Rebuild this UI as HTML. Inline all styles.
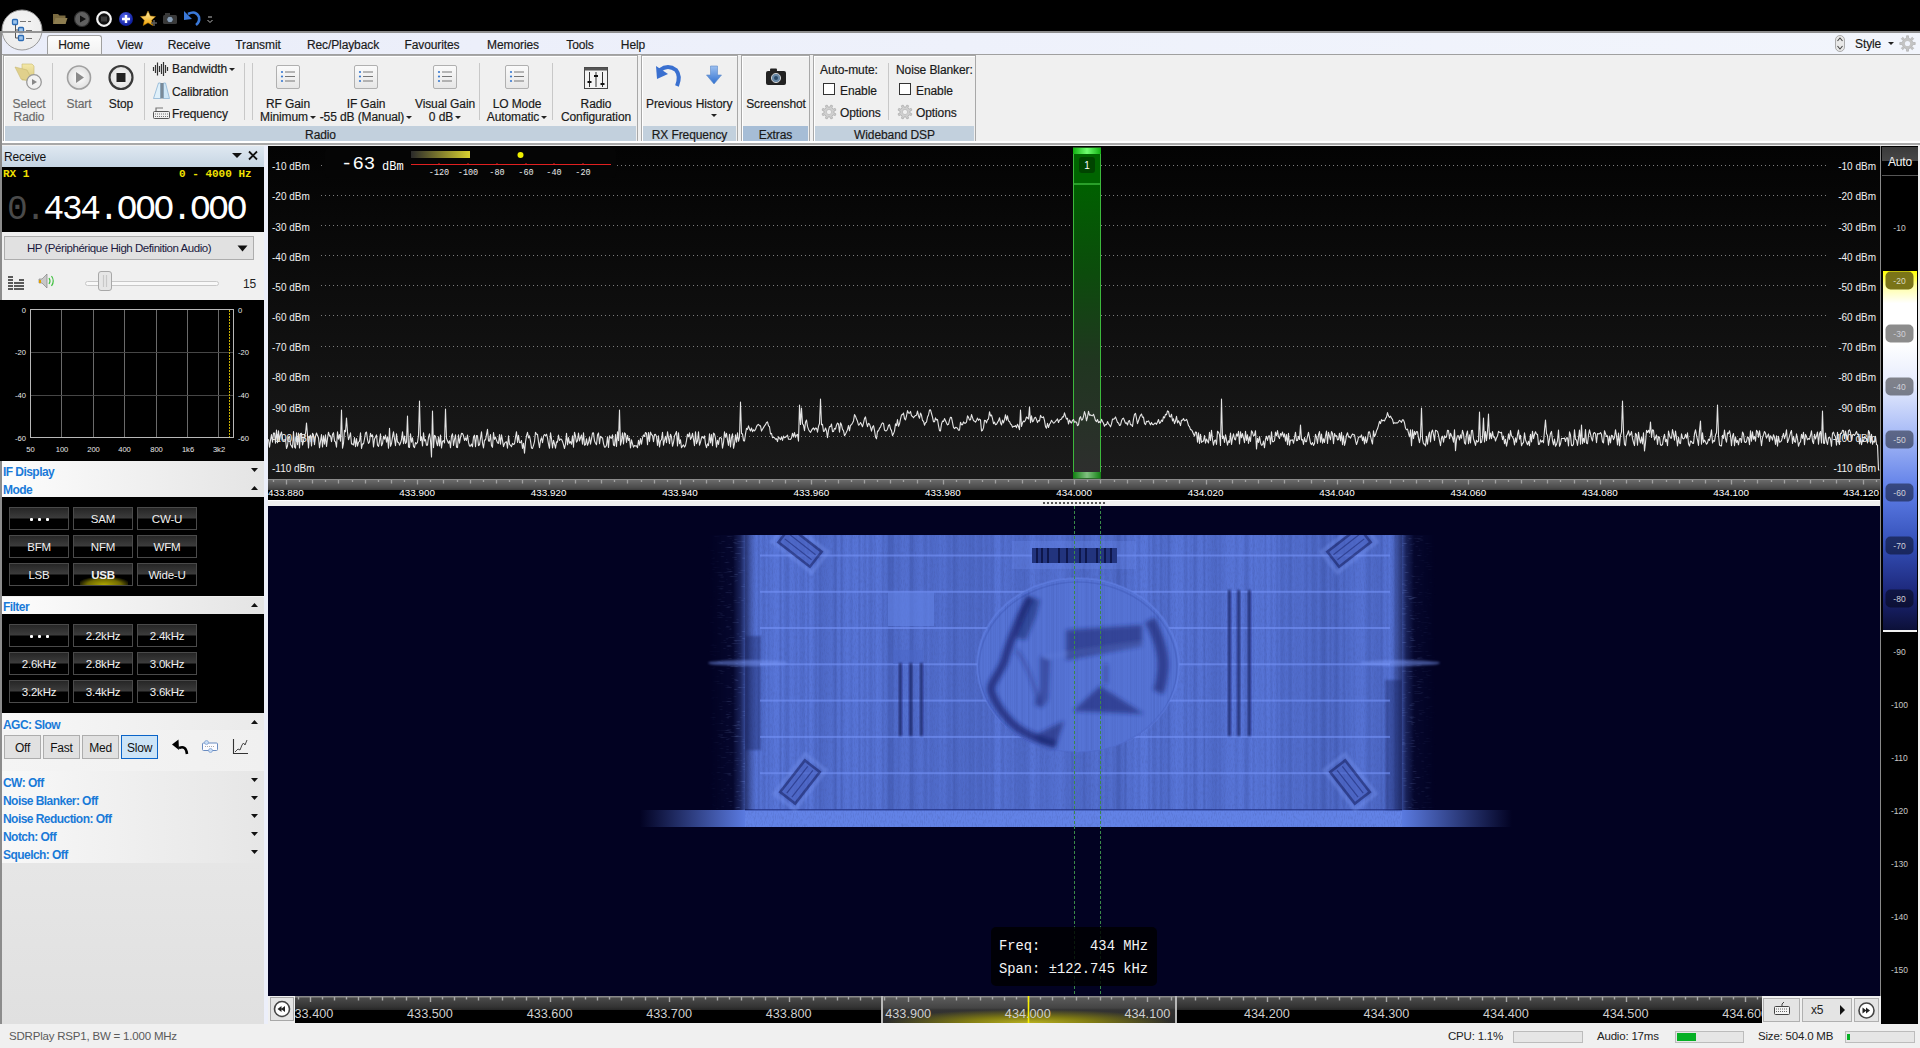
<!DOCTYPE html><html><head><meta charset="utf-8"><style>
*{margin:0;padding:0;box-sizing:border-box}
html,body{width:1920px;height:1048px;overflow:hidden;background:#f0f0f0;font-family:"Liberation Sans",sans-serif;font-size:12px;color:#000;position:relative}
.a{position:absolute}
.t{position:absolute;white-space:nowrap;line-height:1;letter-spacing:-0.2px;margin-top:1px}
.rb{-webkit-text-stroke:0.18px currentColor;letter-spacing:-0.1px}
.t.mono{letter-spacing:0}
.bh{letter-spacing:-0.55px}
.mono{font-family:"Liberation Mono",monospace}
</style></head><body>
<div class="a" style="left:0;top:0;width:1920px;height:31px;background:#000"></div>
<svg class="a" style="left:0;top:0;z-index:5" width="230" height="60">
 <defs>
  <radialGradient id="appg" cx="50%" cy="40%" r="60%"><stop offset="0" stop-color="#f4f4f4"/><stop offset="1" stop-color="#ececec"/></radialGradient>
  <radialGradient id="plg" cx="40%" cy="35%" r="60%"><stop offset="0" stop-color="#5a6cf0"/><stop offset="1" stop-color="#1020a0"/></radialGradient>
  <linearGradient id="starg" x1="0" y1="0" x2="0" y2="1"><stop offset="0" stop-color="#fff2b0"/><stop offset="1" stop-color="#f0a000"/></linearGradient>
 </defs>
 <!-- app button -->
 <circle cx="22" cy="30" r="20" fill="url(#appg)" stroke="#9a9a9a" stroke-width="1"/>
 <g fill="#9cc4ec" stroke="#2a6ab4" stroke-width="1.3">
  <rect x="12.5" y="19.5" width="5" height="5" rx="1"/>
  <rect x="18.5" y="27.5" width="5" height="5" rx="1"/>
  <rect x="18.5" y="35.5" width="5" height="5" rx="1"/>
 </g>
 <path d="M15.5 25 V38 H18.5 M15.5 30 H18.5" stroke="#555" fill="none" stroke-width="1"/>
 <path d="M20 21.5 H26 M28 21.5 H31 M26 30.5 H32 M26 38.5 H32" stroke="#666" stroke-width="0.9"/>
 <!-- folder -->
 <path d="M53 14 h5 l1.5 1.5 h6 v8.5 h-12.5z" fill="#7a6a40"/>
 <path d="M53.5 24 l2 -6 h12 l-2 6z" fill="#8d7d50"/>
 <!-- play -->
 <circle cx="82" cy="19" r="7.5" fill="#606060" stroke="#303030" stroke-width="1.2"/>
 <path d="M80 15.5 L86 19 L80 22.5z" fill="#111"/>
 <!-- stop -->
 <circle cx="104" cy="19" r="6.8" fill="#111" stroke="#f4f4f4" stroke-width="2.2"/>
 <rect x="101" y="16.5" width="6" height="5" fill="#3a3a3a"/>
 <!-- plus -->
 <circle cx="126" cy="19" r="7" fill="url(#plg)"/>
 <path d="M126 15 V23 M122 19 H130" stroke="#fff" stroke-width="2.4"/>
 <!-- star -->
 <path d="M148 11 L150.3 16 L155.5 16.6 L151.6 20.2 L152.8 25.5 L148 22.8 L143.2 25.5 L144.4 20.2 L140.5 16.6 L145.7 16z" fill="url(#starg)" stroke="#c08000" stroke-width="0.5"/>
 <path d="M151 23 h6 M154 20 v6" stroke="#5a5a5a" stroke-width="1.6"/>
 <!-- camera -->
 <rect x="163" y="15" width="14" height="9" rx="1.5" fill="#3a3a3a"/>
 <rect x="165" y="13" width="5" height="3" fill="#3a3a3a"/>
 <circle cx="170" cy="19.5" r="3.3" fill="#8aa0b8" stroke="#222" stroke-width="0.8"/>
 <!-- undo -->
 <path d="M188 14 Q196 10 199 17 Q200 22 196 25" stroke="#3a78d8" stroke-width="2.6" fill="none"/>
 <path d="M184 11 L184 20 L192 19z" fill="#3a78d8"/>
 <!-- dropdown -->
 <path d="M208 17 h4 M207.5 20 l2.5 2.5 l2.5 -2.5" stroke="#bbb" stroke-width="1" fill="none"/>
</svg>
<div class="a" style="left:0;top:31px;width:1920px;height:2px;background:#8c8c8c"></div>
<div class="a" style="left:0;top:33px;width:1920px;height:22px;background:linear-gradient(90deg,#eaedf9,#eef1fb 50%,#f2f5fc)"></div>
<div class="a" style="left:0;top:31px;width:2px;height:993px;background:#8c8c8c"></div>
<div class="a" style="left:47px;top:35px;width:55px;height:21px;background:linear-gradient(#fdfdfd,#f0f0f0);border:1px solid #a0a0a0;border-bottom:none;border-radius:3px 3px 0 0"></div>

<div class="t rb" style="left:14px;width:120px;text-align:center;top:38px;font-size:12px;color:#1a1a1a">Home</div>
<div class="t rb" style="left:70px;width:120px;text-align:center;top:38px;font-size:12px;color:#1a1a1a">View</div>
<div class="t rb" style="left:129px;width:120px;text-align:center;top:38px;font-size:12px;color:#1a1a1a">Receive</div>
<div class="t rb" style="left:198px;width:120px;text-align:center;top:38px;font-size:12px;color:#1a1a1a">Transmit</div>
<div class="t rb" style="left:283px;width:120px;text-align:center;top:38px;font-size:12px;color:#1a1a1a">Rec/Playback</div>
<div class="t rb" style="left:372px;width:120px;text-align:center;top:38px;font-size:12px;color:#1a1a1a">Favourites</div>
<div class="t rb" style="left:453px;width:120px;text-align:center;top:38px;font-size:12px;color:#1a1a1a">Memories</div>
<div class="t rb" style="left:520px;width:120px;text-align:center;top:38px;font-size:12px;color:#1a1a1a">Tools</div>
<div class="t rb" style="left:573px;width:120px;text-align:center;top:38px;font-size:12px;color:#1a1a1a">Help</div>
<div class="a" style="left:2px;top:54px;width:1918px;height:91px;background:#f0f0f0;border-top:1px solid #a0a0a0"></div>
<div class="a" style="left:2px;top:141px;width:1918px;height:2px;background:#fff"></div>
<div class="a" style="left:2px;top:143px;width:1918px;height:2px;background:#a8a8a8"></div>

<div class="a" style="left:3px;top:55px;width:635px;height:86px;border:1px solid #a8a8a8;border-bottom:none;box-shadow:inset 1px 1px 0 #fff"></div>
<div class="a" style="left:5px;top:126px;width:631px;height:15px;background:#c2d0dd"></div>
<div class="t rb" style="left:3px;width:635px;text-align:center;top:128px;color:#1a1a1a">Radio</div>
<div class="a" style="left:641px;top:55px;width:97px;height:86px;border:1px solid #a8a8a8;border-bottom:none;box-shadow:inset 1px 1px 0 #fff"></div>
<div class="a" style="left:643px;top:126px;width:93px;height:15px;background:#c2d0dd"></div>
<div class="t rb" style="left:641px;width:97px;text-align:center;top:128px;color:#1a1a1a">RX Frequency</div>
<div class="a" style="left:741px;top:55px;width:69px;height:86px;border:1px solid #a8a8a8;border-bottom:none;box-shadow:inset 1px 1px 0 #fff"></div>
<div class="a" style="left:743px;top:126px;width:65px;height:15px;background:#a6bdd6"></div>
<div class="t rb" style="left:741px;width:69px;text-align:center;top:128px;color:#1a1a1a">Extras</div>
<div class="a" style="left:813px;top:55px;width:163px;height:86px;border:1px solid #a8a8a8;border-bottom:none;box-shadow:inset 1px 1px 0 #fff"></div>
<div class="a" style="left:815px;top:126px;width:159px;height:15px;background:#c2d0dd"></div>
<div class="t rb" style="left:813px;width:163px;text-align:center;top:128px;color:#1a1a1a">Wideband DSP</div>
<div class="a" style="left:52px;top:63px;width:1px;height:57px;background:#c8c8c8"></div>
<div class="a" style="left:144px;top:63px;width:1px;height:57px;background:#c8c8c8"></div>
<div class="a" style="left:244px;top:63px;width:1px;height:57px;background:#c8c8c8"></div>
<div class="a" style="left:252px;top:63px;width:1px;height:57px;background:#c8c8c8"></div>
<div class="a" style="left:479px;top:63px;width:1px;height:57px;background:#c8c8c8"></div>
<div class="a" style="left:552px;top:63px;width:1px;height:57px;background:#c8c8c8"></div>
<div class="a" style="left:888px;top:63px;width:1px;height:57px;background:#c8c8c8"></div>
<div class="t rb" style="left:-31px;width:120px;text-align:center;top:97px;color:#6a6a6a;">Select</div>
<div class="t rb" style="left:-31px;width:120px;text-align:center;top:110px;color:#6a6a6a;">Radio</div>
<div class="t rb" style="left:19px;width:120px;text-align:center;top:97px;color:#6a6a6a;">Start</div>
<div class="t rb" style="left:61px;width:120px;text-align:center;top:97px;color:#1a1a1a;">Stop</div>
<div class="t rb" style="left:172px;top:62px;color:#1a1a1a;">Bandwidth<span style="display:inline-block;width:0;height:0;border-left:3px solid transparent;border-right:3px solid transparent;border-top:3px solid #222;vertical-align:2px;margin-left:2px"></span></div>
<div class="t rb" style="left:172px;top:85px;color:#1a1a1a;">Calibration</div>
<div class="t rb" style="left:172px;top:107px;color:#1a1a1a;">Frequency</div>
<div class="t rb" style="left:228px;width:120px;text-align:center;top:97px;color:#1a1a1a;">RF Gain</div>
<div class="t rb" style="left:228px;width:120px;text-align:center;top:110px;color:#1a1a1a;">Minimum<span style="display:inline-block;width:0;height:0;border-left:3px solid transparent;border-right:3px solid transparent;border-top:3px solid #222;vertical-align:2px;margin-left:2px"></span></div>
<div class="t rb" style="left:306px;width:120px;text-align:center;top:97px;color:#1a1a1a;">IF Gain</div>
<div class="t rb" style="left:306px;width:120px;text-align:center;top:110px;color:#1a1a1a;">-55 dB (Manual)<span style="display:inline-block;width:0;height:0;border-left:3px solid transparent;border-right:3px solid transparent;border-top:3px solid #222;vertical-align:2px;margin-left:2px"></span></div>
<div class="t rb" style="left:385px;width:120px;text-align:center;top:97px;color:#1a1a1a;">Visual Gain</div>
<div class="t rb" style="left:385px;width:120px;text-align:center;top:110px;color:#1a1a1a;">0 dB<span style="display:inline-block;width:0;height:0;border-left:3px solid transparent;border-right:3px solid transparent;border-top:3px solid #222;vertical-align:2px;margin-left:2px"></span></div>
<div class="t rb" style="left:457px;width:120px;text-align:center;top:97px;color:#1a1a1a;">LO Mode</div>
<div class="t rb" style="left:457px;width:120px;text-align:center;top:110px;color:#1a1a1a;">Automatic<span style="display:inline-block;width:0;height:0;border-left:3px solid transparent;border-right:3px solid transparent;border-top:3px solid #222;vertical-align:2px;margin-left:2px"></span></div>
<div class="t rb" style="left:536px;width:120px;text-align:center;top:97px;color:#1a1a1a;">Radio</div>
<div class="t rb" style="left:536px;width:120px;text-align:center;top:110px;color:#1a1a1a;">Configuration</div>
<div class="t rb" style="left:609px;width:120px;text-align:center;top:97px;color:#1a1a1a;">Previous</div>
<div class="t rb" style="left:654px;width:120px;text-align:center;top:97px;color:#1a1a1a;">History</div>
<div class="a" style="left:711px;top:114px;width:0;height:0;border-left:3px solid transparent;border-right:3px solid transparent;border-top:3px solid #222"></div>
<div class="t rb" style="left:716px;width:120px;text-align:center;top:97px;color:#1a1a1a;">Screenshot</div>
<div class="t rb" style="left:820px;top:63px;color:#1a1a1a;">Auto-mute:</div>
<div class="t rb" style="left:896px;top:63px;color:#1a1a1a;">Noise Blanker:</div>
<div class="t rb" style="left:840px;top:84px;color:#1a1a1a;">Enable</div>
<div class="t rb" style="left:916px;top:84px;color:#1a1a1a;">Enable</div>
<div class="t rb" style="left:840px;top:106px;color:#1a1a1a;">Options</div>
<div class="t rb" style="left:916px;top:106px;color:#1a1a1a;">Options</div>
<div class="a" style="left:823px;top:83px;width:12px;height:12px;background:#fff;border:1px solid #333"></div>
<div class="a" style="left:899px;top:83px;width:12px;height:12px;background:#fff;border:1px solid #333"></div>
<div class="t rb" style="left:1855px;top:37px;color:#1a1a1a;">Style</div>
<div class="a" style="left:1888px;top:42px;width:0;height:0;border-left:3px solid transparent;border-right:3px solid transparent;border-top:3px solid #222"></div>
<svg class="a" style="left:0;top:55px" width="1000" height="75" viewBox="0 55 1000 75">
<defs>
 <linearGradient id="fold" x1="0" y1="0" x2="0" y2="1"><stop offset="0" stop-color="#f4e8a8"/><stop offset="1" stop-color="#d8c880"/></linearGradient>
 <radialGradient id="stopg" cx="50%" cy="50%" r="50%"><stop offset="0" stop-color="#fff"/><stop offset="1" stop-color="#e0e0e0"/></radialGradient>
 <linearGradient id="doc" x1="0" y1="0" x2="0" y2="1"><stop offset="0" stop-color="#fbfbfb"/><stop offset="1" stop-color="#e6e6e6"/></linearGradient>
 <linearGradient id="arr" x1="0" y1="0" x2="0" y2="1"><stop offset="0" stop-color="#9cc0f0"/><stop offset="1" stop-color="#3070d0"/></linearGradient>
</defs>
<!-- select radio -->
<path d="M22 64 h10 l2 2 v14 h-12z" fill="url(#fold)" stroke="#c8b870" stroke-width="0.6"/>
<path d="M15 67 l12 3 l6 12 l-12 -3z" fill="#e0d08c" stroke="#c8b870" stroke-width="0.6"/>
<circle cx="34" cy="82" r="7.3" fill="#f2f2f2" stroke="#999" stroke-width="1.3"/>
<path d="M32 79 L37 82 L32 85z" fill="#888"/>
<!-- start -->
<circle cx="79" cy="77.5" r="11.5" fill="url(#stopg)" stroke="#a0a0a0" stroke-width="1.6"/>
<path d="M76 72 L84 77.5 L76 83z" fill="#8a8a8a"/>
<!-- stop -->
<circle cx="121" cy="77.5" r="11.5" fill="url(#stopg)" stroke="#3a3a3a" stroke-width="2.2"/>
<rect x="116.5" y="73" width="9" height="9" fill="#222"/>
<!-- bandwidth -->
<g stroke="#333" stroke-width="1.2">
<path d="M153.5 67 v4 M155.5 65 v8 M157.5 62.5 v13 M159.5 66 v6 M161.5 64 v10 M163.5 62 v14 M165.5 65 v8 M167.5 67 v4"/>
</g>
<!-- calibration -->
<path d="M153.5 98.5 L158.5 83 L160.5 83 L160.5 98.5z" fill="#dff0fa" stroke="#8cb4d4" stroke-width="0.8"/>
<path d="M163.5 98.5 L163.5 83 L165.5 83 L169.5 98.5z" fill="#cfe6f6" stroke="#8cb4d4" stroke-width="0.8"/>
<rect x="160.5" y="83" width="3" height="15.5" fill="#7a8a98"/>
<!-- frequency keyboard -->
<rect x="153.5" y="111.5" width="16" height="7" rx="1" fill="#f0f0f0" stroke="#555" stroke-width="1"/>
<path d="M155 114 h13 M155 116.5 h13" stroke="#666" stroke-width="0.9" stroke-dasharray="1 1"/>
<path d="M156 111 v-3 h7" stroke="#777" stroke-width="1.2" fill="none"/>
<rect x="276.5" y="65.5" width="23" height="23" rx="1.5" fill="url(#doc)" stroke="#b0b0b0"/>
<circle cx="282" cy="72" r="1.1" fill="#3a7ad0"/><circle cx="282" cy="76.5" r="1.1" fill="#3a7ad0"/><circle cx="282" cy="81" r="1.1" fill="#3a7ad0"/>
<path d="M285 72 h10 M285 76.5 h10 M285 81 h10" stroke="#777" stroke-width="1"/><rect x="354.5" y="65.5" width="23" height="23" rx="1.5" fill="url(#doc)" stroke="#b0b0b0"/>
<circle cx="360" cy="72" r="1.1" fill="#3a7ad0"/><circle cx="360" cy="76.5" r="1.1" fill="#3a7ad0"/><circle cx="360" cy="81" r="1.1" fill="#3a7ad0"/>
<path d="M363 72 h10 M363 76.5 h10 M363 81 h10" stroke="#777" stroke-width="1"/><rect x="433.5" y="65.5" width="23" height="23" rx="1.5" fill="url(#doc)" stroke="#b0b0b0"/>
<circle cx="439" cy="72" r="1.1" fill="#3a7ad0"/><circle cx="439" cy="76.5" r="1.1" fill="#3a7ad0"/><circle cx="439" cy="81" r="1.1" fill="#3a7ad0"/>
<path d="M442 72 h10 M442 76.5 h10 M442 81 h10" stroke="#777" stroke-width="1"/><rect x="505.5" y="65.5" width="23" height="23" rx="1.5" fill="url(#doc)" stroke="#b0b0b0"/>
<circle cx="511" cy="72" r="1.1" fill="#3a7ad0"/><circle cx="511" cy="76.5" r="1.1" fill="#3a7ad0"/><circle cx="511" cy="81" r="1.1" fill="#3a7ad0"/>
<path d="M514 72 h10 M514 76.5 h10 M514 81 h10" stroke="#777" stroke-width="1"/>
<!-- radio config -->
<rect x="584.5" y="67.5" width="23" height="21" fill="#f4f4f4" stroke="#444"/>
<rect x="584.5" y="67.5" width="23" height="3" fill="#555"/>
<path d="M589.5 72 v15 M596 72 v15 M602.5 72 v15" stroke="#333" stroke-width="1"/>
<path d="M587.5 82 h4 M594 76 h4 M600.5 84 h4" stroke="#111" stroke-width="2"/>
<!-- previous -->
<path d="M660 70 Q668 64 676 70 Q681 76 677 86" stroke="#3a70d0" stroke-width="4" fill="none"/>
<path d="M656 66 L657 79 L668 74z" fill="#3a70d0"/>
<!-- history -->
<path d="M710.5 66 h7 v9 h4 l-7.5 9 l-7.5 -9 h4z" fill="url(#arr)" stroke="#5a88c8" stroke-width="0.6"/>
<!-- camera -->
<rect x="766" y="71" width="20" height="14" rx="2" fill="#222"/>
<rect x="770" y="68.5" width="7" height="3" rx="1" fill="#222"/>
<circle cx="776" cy="78" r="4.6" fill="#6a8aa8" stroke="#ccc" stroke-width="1"/>
<circle cx="776" cy="78" r="2" fill="#2a4a68"/>
<!-- gears -->
<g fill="#cfcfcf" stroke="#a8a8a8" stroke-width="0.7">
<path d="M833.93,112.86 L835.95,113.87 L835.24,115.59 L833.09,114.88 L831.88,116.09 L832.59,118.24 L830.87,118.95 L829.86,116.93 L828.14,116.93 L827.13,118.95 L825.41,118.24 L826.12,116.09 L824.91,114.88 L822.76,115.59 L822.05,113.87 L824.07,112.86 L824.07,111.14 L822.05,110.13 L822.76,108.41 L824.91,109.12 L826.12,107.91 L825.41,105.76 L827.13,105.05 L828.14,107.07 L829.86,107.07 L830.87,105.05 L832.59,105.76 L831.88,107.91 L833.09,109.12 L835.24,108.41 L835.95,110.13 L833.93,111.14z"/><path d="M909.93,112.86 L911.95,113.87 L911.24,115.59 L909.09,114.88 L907.88,116.09 L908.59,118.24 L906.87,118.95 L905.86,116.93 L904.14,116.93 L903.13,118.95 L901.41,118.24 L902.12,116.09 L900.91,114.88 L898.76,115.59 L898.05,113.87 L900.07,112.86 L900.07,111.14 L898.05,110.13 L898.76,108.41 L900.91,109.12 L902.12,107.91 L901.41,105.76 L903.13,105.05 L904.14,107.07 L905.86,107.07 L906.87,105.05 L908.59,105.76 L907.88,107.91 L909.09,109.12 L911.24,108.41 L911.95,110.13 L909.93,111.14z"/>
</g>
<circle cx="829" cy="112" r="2.6" fill="#f0f0f0" stroke="#b0b0b0" stroke-width="0.6"/><circle cx="905" cy="112" r="2.6" fill="#f0f0f0" stroke="#b0b0b0" stroke-width="0.6"/>
</svg>
<svg class="a" style="left:1830px;top:33px" width="90" height="22">
<rect x="5.5" y="2.5" width="9" height="16" rx="4.5" fill="#e8e8e8" stroke="#999" stroke-width="0.8"/>
<path d="M7.5 8 l2.5 -3 l2.5 3 M7.5 13 l2.5 3 l2.5 -3" stroke="#444" fill="none" stroke-width="1.1"/>
<path d="M82.79,9.43 L85.23,9.49 L85.23,11.51 L82.79,11.57 L82.00,13.48 L83.68,15.25 L82.25,16.68 L80.48,15.00 L78.57,15.79 L78.51,18.23 L76.49,18.23 L76.43,15.79 L74.52,15.00 L72.75,16.68 L71.32,15.25 L73.00,13.48 L72.21,11.57 L69.77,11.51 L69.77,9.49 L72.21,9.43 L73.00,7.52 L71.32,5.75 L72.75,4.32 L74.52,6.00 L76.43,5.21 L76.49,2.77 L78.51,2.77 L78.57,5.21 L80.48,6.00 L82.25,4.32 L83.68,5.75 L82.00,7.52z" fill="#c4c4c4" stroke="#a8a8a8" stroke-width="0.6"/>
<circle cx="77.5" cy="10.5" r="2.6" fill="#f0f3fb"/>
</svg>
<div class="a" style="left:2px;top:31px;width:42px;height:2px;background:#8c8c8c;z-index:6;opacity:0.9"></div>
<div class="a" style="left:2px;top:145px;width:262px;height:879px;background:#f0f0f0"></div>
<div class="a" style="left:264px;top:145px;width:4px;height:879px;background:#eceffa"></div>
<div class="a" style="left:2px;top:146px;width:262px;height:21px;background:linear-gradient(#dfe8f1,#c6d5e3)"></div>
<div class="t" style="left:4px;top:150px;font-size:12px;color:#111">Receive</div>
<svg class="a" style="left:228px;top:148px" width="36" height="16"><path d="M4 5 h10 l-5 5z" fill="#111"/><path d="M21 3.5 l8 8 M29 3.5 l-8 8" stroke="#111" stroke-width="1.8"/></svg>
<div class="a" style="left:2px;top:167px;width:262px;height:65px;background:#000"></div>
<div class="t mono" style="left:3px;top:168px;font-size:11px;font-weight:bold;color:#f0e000">RX 1</div>
<div class="t mono" style="left:179px;top:168px;font-size:11px;font-weight:bold;color:#f0e000">0 - 4000 Hz</div>
<div class="t mono" style="left:7px;top:192px;font-size:34.5px;color:#fff;letter-spacing:-2.4px"><span style="color:#4a4a4a">0.</span>434.OOO.OOO</div>
<div class="a" style="left:4px;top:236px;width:250px;height:24px;background:#e1e1e1;border:1px solid #adadad"></div>
<div class="t" style="left:4px;width:230px;text-align:center;top:242px;font-size:11.5px;letter-spacing:-0.45px;color:#1a1a40">HP (Périphérique High Definition Audio)</div>
<svg class="a" style="left:236px;top:244px" width="14" height="10"><path d="M1.5 1.5 h10 l-5 6z" fill="#111"/></svg>
<svg class="a" style="left:6px;top:270px" width="250" height="24">
 <rect x="2" y="18" width="5" height="2" fill="#5a5a5a"/><rect x="2" y="15" width="5" height="2" fill="#5a5a5a"/><rect x="2" y="12" width="5" height="2" fill="#5a5a5a"/><rect x="2" y="9" width="5" height="2" fill="#5a5a5a"/><rect x="2" y="6" width="5" height="2" fill="#5a5a5a"/><rect x="8" y="18" width="5" height="2" fill="#5a5a5a"/><rect x="8" y="15" width="5" height="2" fill="#5a5a5a"/><rect x="8" y="12" width="5" height="2" fill="#5a5a5a"/><rect x="13" y="18" width="5" height="2" fill="#5a5a5a"/><rect x="13" y="15" width="5" height="2" fill="#5a5a5a"/><rect x="13" y="12" width="5" height="2" fill="#5a5a5a"/><rect x="13" y="9" width="5" height="2" fill="#5a5a5a"/>
 <path d="M33 9 h3 l5 -5 v14 l-5 -5 h-3z" fill="#c8c8c8" stroke="#777" stroke-width="0.6"/>
 <path d="M33 10 h2 v3 h-2z" fill="#e0a000"/>
 <path d="M43 8 q2 3 0 6 M45.5 6 q3.5 5 0 10" stroke="#40c040" stroke-width="1.2" fill="none"/>
 <rect x="79.5" y="11.5" width="133" height="4" rx="2" fill="#f8f8f8" stroke="#c8c8c8"/>
 <rect x="92.5" y="1.5" width="13" height="19" rx="2.5" fill="#e6e6e6" stroke="#a8a8a8"/>
 <path d="M97.5 5 v12 M100.5 5 v12" stroke="#c8c8c8" stroke-width="1.2"/>
</svg>
<div class="t" style="left:243px;top:277px;font-size:12px;color:#222">15</div>

<div class="a" style="left:0;top:300px;width:264px;height:161px;background:#000"></div>
<svg class="a" style="left:2px;top:299px" width="262" height="162"><path d="M59.5 10.5 V138.5" stroke="#6a6a6a" stroke-width="1"/><path d="M91.5 10.5 V138.5" stroke="#6a6a6a" stroke-width="1"/><path d="M122.5 10.5 V138.5" stroke="#6a6a6a" stroke-width="1"/><path d="M154.5 10.5 V138.5" stroke="#6a6a6a" stroke-width="1"/><path d="M185.5 10.5 V138.5" stroke="#6a6a6a" stroke-width="1"/><path d="M216.5 10.5 V138.5" stroke="#6a6a6a" stroke-width="1"/><path d="M28.5 53.5 H231.5" stroke="#464646" stroke-width="1"/><path d="M28.5 96.5 H231.5" stroke="#464646" stroke-width="1"/><rect x="28.5" y="10.5" width="203.0" height="128.0" fill="none" stroke="#b8b8b8" stroke-width="1"/><path d="M227.5 11 V138" stroke="#c8b000" stroke-width="1" stroke-dasharray="2 1"/><g font-family="Liberation Sans" font-size="7.6" fill="#e8e8e8"><text x="24" y="14" text-anchor="end">0</text><text x="236" y="14">0</text><text x="24" y="56" text-anchor="end">-20</text><text x="236" y="56">-20</text><text x="24" y="99" text-anchor="end">-40</text><text x="236" y="99">-40</text><text x="24" y="142" text-anchor="end">-60</text><text x="236" y="142">-60</text><text x="28.5" y="153" text-anchor="middle">50</text><text x="60" y="153" text-anchor="middle">100</text><text x="91.5" y="153" text-anchor="middle">200</text><text x="122.5" y="153" text-anchor="middle">400</text><text x="154.5" y="153" text-anchor="middle">800</text><text x="186" y="153" text-anchor="middle">1k6</text><text x="217" y="153" text-anchor="middle">3k2</text></g></svg>
<div class="a" style="left:2px;top:461px;width:262px;height:18px;background:linear-gradient(90deg,#fdfdfd,#e4e4e4)"></div>
<div class="t" style="left:3px;top:465px;font-size:12px;font-weight:bold;color:#1a7ad8;letter-spacing:-0.55px">IF Display</div>
<svg class="a" style="left:250px;top:467px" width="10" height="7"><path d="M1 1 h7 l-3.5 4z" fill="#111"/></svg>
<div class="a" style="left:2px;top:479px;width:262px;height:18px;background:linear-gradient(90deg,#fdfdfd,#e4e4e4)"></div>
<div class="t" style="left:3px;top:483px;font-size:12px;font-weight:bold;color:#1a7ad8;letter-spacing:-0.55px">Mode</div>
<svg class="a" style="left:250px;top:485px" width="10" height="7"><path d="M1 5 h7 l-3.5 -4z" fill="#111"/></svg>
<div class="a" style="left:2px;top:497px;width:262px;height:99px;background:#000"></div>
<div class="a" style="left:9px;top:507px;width:60px;height:23px;border:1px solid #4a4a4a;background:linear-gradient(#262626 0,#3c3c3c 10px,#000 11px,#000 100%);overflow:hidden"><div class="t" style="left:0;width:58px;text-align:center;top:5px;font-size:11.5px;color:#f0f0f0;font-weight:normal"><svg width="20" height="5" style="vertical-align:1px"><rect x="1" y="1" width="3" height="3" rx="1" fill="#fff"/><rect x="9" y="1" width="3" height="3" rx="1" fill="#fff"/><rect x="17" y="1" width="3" height="3" rx="1" fill="#fff"/></svg></div></div>
<div class="a" style="left:73px;top:507px;width:60px;height:23px;border:1px solid #4a4a4a;background:linear-gradient(#262626 0,#3c3c3c 10px,#000 11px,#000 100%);overflow:hidden"><div class="t" style="left:0;width:58px;text-align:center;top:5px;font-size:11.5px;color:#f0f0f0;font-weight:normal">SAM</div></div>
<div class="a" style="left:137px;top:507px;width:60px;height:23px;border:1px solid #4a4a4a;background:linear-gradient(#262626 0,#3c3c3c 10px,#000 11px,#000 100%);overflow:hidden"><div class="t" style="left:0;width:58px;text-align:center;top:5px;font-size:11.5px;color:#f0f0f0;font-weight:normal">CW-U</div></div>
<div class="a" style="left:9px;top:535px;width:60px;height:23px;border:1px solid #4a4a4a;background:linear-gradient(#262626 0,#3c3c3c 10px,#000 11px,#000 100%);overflow:hidden"><div class="t" style="left:0;width:58px;text-align:center;top:5px;font-size:11.5px;color:#f0f0f0;font-weight:normal">BFM</div></div>
<div class="a" style="left:73px;top:535px;width:60px;height:23px;border:1px solid #4a4a4a;background:linear-gradient(#262626 0,#3c3c3c 10px,#000 11px,#000 100%);overflow:hidden"><div class="t" style="left:0;width:58px;text-align:center;top:5px;font-size:11.5px;color:#f0f0f0;font-weight:normal">NFM</div></div>
<div class="a" style="left:137px;top:535px;width:60px;height:23px;border:1px solid #4a4a4a;background:linear-gradient(#262626 0,#3c3c3c 10px,#000 11px,#000 100%);overflow:hidden"><div class="t" style="left:0;width:58px;text-align:center;top:5px;font-size:11.5px;color:#f0f0f0;font-weight:normal">WFM</div></div>
<div class="a" style="left:9px;top:563px;width:60px;height:23px;border:1px solid #4a4a4a;background:linear-gradient(#262626 0,#3c3c3c 10px,#000 11px,#000 100%);overflow:hidden"><div class="t" style="left:0;width:58px;text-align:center;top:5px;font-size:11.5px;color:#f0f0f0;font-weight:normal">LSB</div></div>
<div class="a" style="left:73px;top:563px;width:60px;height:23px;border:1px solid #4a4a4a;background:linear-gradient(#262626 0,#3c3c3c 10px,#000 11px,#000 100%);overflow:hidden"><div class="a" style="left:6px;bottom:0;width:48px;height:8px;border-radius:50% 50% 0 0;background:radial-gradient(ellipse at 50% 100%,#b0a800 0%,#706a00 50%,transparent 80%)"></div><div class="t" style="left:0;width:58px;text-align:center;top:5px;font-size:11.5px;color:#f0f0f0;font-weight:bold">USB</div></div>
<div class="a" style="left:137px;top:563px;width:60px;height:23px;border:1px solid #4a4a4a;background:linear-gradient(#262626 0,#3c3c3c 10px,#000 11px,#000 100%);overflow:hidden"><div class="t" style="left:0;width:58px;text-align:center;top:5px;font-size:11.5px;color:#f0f0f0;font-weight:normal">Wide-U</div></div>
<div class="a" style="left:2px;top:597px;width:262px;height:17px;background:linear-gradient(90deg,#fdfdfd,#e4e4e4)"></div>
<div class="t" style="left:3px;top:600px;font-size:12px;font-weight:bold;color:#1a7ad8;letter-spacing:-0.55px">Filter</div>
<svg class="a" style="left:250px;top:602px" width="10" height="7"><path d="M1 5 h7 l-3.5 -4z" fill="#111"/></svg>
<div class="a" style="left:2px;top:614px;width:262px;height:99px;background:#000"></div>
<div class="a" style="left:9px;top:624px;width:60px;height:23px;border:1px solid #4a4a4a;background:linear-gradient(#262626 0,#3c3c3c 10px,#000 11px,#000 100%);overflow:hidden"><div class="t" style="left:0;width:58px;text-align:center;top:5px;font-size:11.5px;color:#f0f0f0;font-weight:normal"><svg width="20" height="5" style="vertical-align:1px"><rect x="1" y="1" width="3" height="3" rx="1" fill="#fff"/><rect x="9" y="1" width="3" height="3" rx="1" fill="#fff"/><rect x="17" y="1" width="3" height="3" rx="1" fill="#fff"/></svg></div></div>
<div class="a" style="left:73px;top:624px;width:60px;height:23px;border:1px solid #4a4a4a;background:linear-gradient(#262626 0,#3c3c3c 10px,#000 11px,#000 100%);overflow:hidden"><div class="t" style="left:0;width:58px;text-align:center;top:5px;font-size:11.5px;color:#f0f0f0;font-weight:normal">2.2kHz</div></div>
<div class="a" style="left:137px;top:624px;width:60px;height:23px;border:1px solid #4a4a4a;background:linear-gradient(#262626 0,#3c3c3c 10px,#000 11px,#000 100%);overflow:hidden"><div class="t" style="left:0;width:58px;text-align:center;top:5px;font-size:11.5px;color:#f0f0f0;font-weight:normal">2.4kHz</div></div>
<div class="a" style="left:9px;top:652px;width:60px;height:23px;border:1px solid #4a4a4a;background:linear-gradient(#262626 0,#3c3c3c 10px,#000 11px,#000 100%);overflow:hidden"><div class="t" style="left:0;width:58px;text-align:center;top:5px;font-size:11.5px;color:#f0f0f0;font-weight:normal">2.6kHz</div></div>
<div class="a" style="left:73px;top:652px;width:60px;height:23px;border:1px solid #4a4a4a;background:linear-gradient(#262626 0,#3c3c3c 10px,#000 11px,#000 100%);overflow:hidden"><div class="t" style="left:0;width:58px;text-align:center;top:5px;font-size:11.5px;color:#f0f0f0;font-weight:normal">2.8kHz</div></div>
<div class="a" style="left:137px;top:652px;width:60px;height:23px;border:1px solid #4a4a4a;background:linear-gradient(#262626 0,#3c3c3c 10px,#000 11px,#000 100%);overflow:hidden"><div class="t" style="left:0;width:58px;text-align:center;top:5px;font-size:11.5px;color:#f0f0f0;font-weight:normal">3.0kHz</div></div>
<div class="a" style="left:9px;top:680px;width:60px;height:23px;border:1px solid #4a4a4a;background:linear-gradient(#262626 0,#3c3c3c 10px,#000 11px,#000 100%);overflow:hidden"><div class="t" style="left:0;width:58px;text-align:center;top:5px;font-size:11.5px;color:#f0f0f0;font-weight:normal">3.2kHz</div></div>
<div class="a" style="left:73px;top:680px;width:60px;height:23px;border:1px solid #4a4a4a;background:linear-gradient(#262626 0,#3c3c3c 10px,#000 11px,#000 100%);overflow:hidden"><div class="t" style="left:0;width:58px;text-align:center;top:5px;font-size:11.5px;color:#f0f0f0;font-weight:normal">3.4kHz</div></div>
<div class="a" style="left:137px;top:680px;width:60px;height:23px;border:1px solid #4a4a4a;background:linear-gradient(#262626 0,#3c3c3c 10px,#000 11px,#000 100%);overflow:hidden"><div class="t" style="left:0;width:58px;text-align:center;top:5px;font-size:11.5px;color:#f0f0f0;font-weight:normal">3.6kHz</div></div>
<div class="a" style="left:2px;top:713px;width:262px;height:58px;background:linear-gradient(90deg,#f8f8f8,#eaeaea)"></div>
<div class="t" style="left:3px;top:718px;font-size:12px;font-weight:bold;color:#1a7ad8;letter-spacing:-0.55px">AGC: Slow</div>
<svg class="a" style="left:250px;top:719px" width="10" height="7"><path d="M1 5 h7 l-3.5 -4z" fill="#111"/></svg>
<div class="a" style="left:2px;top:730px;width:262px;height:41px;background:linear-gradient(90deg,#f4f4f4,#f0f0f0)"></div>
<div class="a" style="left:4px;top:735px;width:37px;height:24px;background:#e1e1e1;border:1px solid #adadad"></div><div class="t" style="left:4px;width:37px;text-align:center;top:741px;font-size:12px;color:#111">Off</div>
<div class="a" style="left:43px;top:735px;width:37px;height:24px;background:#e1e1e1;border:1px solid #adadad"></div><div class="t" style="left:43px;width:37px;text-align:center;top:741px;font-size:12px;color:#111">Fast</div>
<div class="a" style="left:82px;top:735px;width:37px;height:24px;background:#e1e1e1;border:1px solid #adadad"></div><div class="t" style="left:82px;width:37px;text-align:center;top:741px;font-size:12px;color:#111">Med</div>
<div class="a" style="left:121px;top:735px;width:37px;height:24px;background:#cce4f7;border:1px solid #0a64c8"></div><div class="t" style="left:121px;width:37px;text-align:center;top:741px;font-size:12px;color:#111">Slow</div>
<svg class="a" style="left:168px;top:736px" width="90" height="22">
<path d="M11 12 Q18 9 19 18" stroke="#000" stroke-width="2.6" fill="none"/>
<path d="M4 8.5 L10.5 3.5 L11 14z" fill="#000"/>
<rect x="34.5" y="7" width="15" height="7.5" rx="1" fill="#fbfbff" stroke="#6a8cc0" stroke-width="1"/>
<path d="M37 10.5 h10" stroke="#aaa" stroke-dasharray="1 1"/>
<circle cx="38.5" cy="6.5" r="2" fill="#c8dcf4" stroke="#7a9cd0" stroke-width="0.7"/>
<circle cx="42.5" cy="14.5" r="2" fill="#c8dcf4" stroke="#7a9cd0" stroke-width="0.7"/>
<path d="M65.5 3 V18 M65 17.5 H80" stroke="#333" stroke-width="1.1" fill="none"/>
<path d="M67 16 L70 13 L72 14 L74 9 L75.5 7 L77 9 L79 4" stroke="#333" stroke-width="0.9" fill="none"/>
</svg>
<div class="a" style="left:2px;top:771px;width:262px;height:92px;background:linear-gradient(90deg,#f8f8f8,#e6e6e6)"></div>
<div class="t" style="left:3px;top:776px;font-size:12px;font-weight:bold;color:#1a7ad8;letter-spacing:-0.55px">CW: Off</div>
<svg class="a" style="left:250px;top:777px" width="10" height="7"><path d="M1 1 h7 l-3.5 4z" fill="#111"/></svg>
<div class="t" style="left:3px;top:794px;font-size:12px;font-weight:bold;color:#1a7ad8;letter-spacing:-0.55px">Noise Blanker: Off</div>
<svg class="a" style="left:250px;top:795px" width="10" height="7"><path d="M1 1 h7 l-3.5 4z" fill="#111"/></svg>
<div class="t" style="left:3px;top:812px;font-size:12px;font-weight:bold;color:#1a7ad8;letter-spacing:-0.55px">Noise Reduction: Off</div>
<svg class="a" style="left:250px;top:813px" width="10" height="7"><path d="M1 1 h7 l-3.5 4z" fill="#111"/></svg>
<div class="t" style="left:3px;top:830px;font-size:12px;font-weight:bold;color:#1a7ad8;letter-spacing:-0.55px">Notch: Off</div>
<svg class="a" style="left:250px;top:831px" width="10" height="7"><path d="M1 1 h7 l-3.5 4z" fill="#111"/></svg>
<div class="t" style="left:3px;top:848px;font-size:12px;font-weight:bold;color:#1a7ad8;letter-spacing:-0.55px">Squelch: Off</div>
<svg class="a" style="left:250px;top:849px" width="10" height="7"><path d="M1 1 h7 l-3.5 4z" fill="#111"/></svg>
<div class="a" style="left:2px;top:863px;width:262px;height:161px;background:linear-gradient(#e6e6e6,#e0e0e0)"></div>
<div class="a" style="left:268px;top:146px;width:1612px;height:333px;background:linear-gradient(#030303,#0c0c0c 40%,#1a1a1a)"></div>
<svg class="a" style="left:0;top:0" width="1920" height="500"><path d="M321 165.5 H1826" stroke="#7c7c7c" stroke-width="1" stroke-dasharray="1 3"/><path d="M321 195.5 H1826" stroke="#7c7c7c" stroke-width="1" stroke-dasharray="1 3"/><path d="M321 225.5 H1826" stroke="#7c7c7c" stroke-width="1" stroke-dasharray="1 3"/><path d="M321 255.5 H1826" stroke="#7c7c7c" stroke-width="1" stroke-dasharray="1 3"/><path d="M321 285.5 H1826" stroke="#7c7c7c" stroke-width="1" stroke-dasharray="1 3"/><path d="M321 315.5 H1826" stroke="#7c7c7c" stroke-width="1" stroke-dasharray="1 3"/><path d="M321 346.5 H1826" stroke="#7c7c7c" stroke-width="1" stroke-dasharray="1 3"/><path d="M321 376.5 H1826" stroke="#7c7c7c" stroke-width="1" stroke-dasharray="1 3"/><path d="M321 406.5 H1826" stroke="#7c7c7c" stroke-width="1" stroke-dasharray="1 3"/><path d="M321 436.5 H1826" stroke="#7c7c7c" stroke-width="1" stroke-dasharray="1 3"/><path d="M321 466.5 H1826" stroke="#7c7c7c" stroke-width="1" stroke-dasharray="1 3"/><g font-family="Liberation Sans" font-size="10" fill="#f0f0f0"><text x="272" y="170.2">-10 dBm</text><text x="1876" y="170.2" text-anchor="end">-10 dBm</text><text x="272" y="200.4">-20 dBm</text><text x="1876" y="200.4" text-anchor="end">-20 dBm</text><text x="272" y="230.5">-30 dBm</text><text x="1876" y="230.5" text-anchor="end">-30 dBm</text><text x="272" y="260.7">-40 dBm</text><text x="1876" y="260.7" text-anchor="end">-40 dBm</text><text x="272" y="290.8">-50 dBm</text><text x="1876" y="290.8" text-anchor="end">-50 dBm</text><text x="272" y="321.0">-60 dBm</text><text x="1876" y="321.0" text-anchor="end">-60 dBm</text><text x="272" y="351.2">-70 dBm</text><text x="1876" y="351.2" text-anchor="end">-70 dBm</text><text x="272" y="381.3">-80 dBm</text><text x="1876" y="381.3" text-anchor="end">-80 dBm</text><text x="272" y="411.5">-90 dBm</text><text x="1876" y="411.5" text-anchor="end">-90 dBm</text><text x="272" y="441.6">-100 dBm</text><text x="1876" y="441.6" text-anchor="end">-100 dBm</text><text x="272" y="471.8">-110 dBm</text><text x="1876" y="471.8" text-anchor="end">-110 dBm</text></g><defs>
<linearGradient id="mk" x1="0" y1="0" x2="0" y2="1"><stop offset="0" stop-color="#006000"/><stop offset="0.3" stop-color="#0c4c0c"/><stop offset="0.6" stop-color="#203620"/><stop offset="1" stop-color="#2e2e2e"/></linearGradient>
<linearGradient id="mkb" x1="0" y1="0" x2="1" y2="0"><stop offset="0" stop-color="#10b010"/><stop offset="0.5" stop-color="#70ff70"/><stop offset="1" stop-color="#10b010"/></linearGradient>
<linearGradient id="mkb2" x1="0" y1="0" x2="1" y2="0"><stop offset="0" stop-color="#108010"/><stop offset="0.5" stop-color="#80c080"/><stop offset="1" stop-color="#108010"/></linearGradient>
</defs><rect x="1073" y="148" width="28" height="36" fill="#006400"/><rect x="1073" y="184" width="28" height="294" fill="url(#mk)"/><rect x="1073.5" y="148" width="27" height="330" fill="none" stroke="#3cb83c" stroke-width="1"/><rect x="1073" y="148" width="28" height="6" fill="url(#mkb)"/><rect x="1074" y="183" width="26" height="2" fill="#2aa02a"/><rect x="1079" y="157" width="16" height="16" rx="3" fill="#004400"/><text x="1087" y="169" font-family="Liberation Sans" font-size="10" fill="#fff" text-anchor="middle">1</text><rect x="1073" y="472" width="28" height="6" fill="url(#mkb2)"/><polyline fill="none" stroke="#e4e4e4" stroke-width="1.1" stroke-linejoin="round" points="268.5,439.2 269.5,447.2 270.5,440.1 271.5,434.6 272.5,442.2 273.5,433.1 274.5,433.0 275.5,443.3 276.5,430.0 277.5,442.6 278.5,430.7 279.5,440.5 280.5,434.7 281.5,432.0 282.5,439.0 283.5,440.3 284.5,440.0 285.5,439.3 286.5,448.5 287.5,445.8 288.5,436.9 289.5,436.4 290.5,444.5 291.5,445.9 292.5,447.8 293.5,431.5 294.5,447.0 295.5,448.2 296.5,432.7 297.5,444.7 298.5,433.0 299.5,447.9 300.5,433.5 301.5,433.2 302.5,445.0 303.5,441.0 304.5,434.7 305.5,433.7 306.5,423.0 307.5,435.1 308.5,448.0 309.5,436.7 310.5,435.1 311.5,446.0 312.5,433.2 313.5,435.1 314.5,444.6 315.5,436.5 316.5,433.0 317.5,435.6 318.5,437.8 319.5,447.8 320.5,441.3 321.5,434.6 322.5,446.9 323.5,435.7 324.5,444.1 325.5,434.8 326.5,446.5 327.5,438.7 328.5,432.2 329.5,435.6 330.5,435.9 331.5,441.6 332.5,434.5 333.5,432.7 334.5,441.0 335.5,441.9 336.5,447.1 337.5,431.8 338.5,439.1 339.5,434.5 340.5,441.2 341.5,410.0 342.5,448.2 343.5,443.3 344.5,430.2 345.5,431.8 346.5,418.0 347.5,431.9 348.5,439.7 349.5,436.9 350.5,432.8 351.5,444.0 352.5,444.0 353.5,445.0 354.5,437.5 355.5,446.8 356.5,438.6 357.5,446.2 358.5,442.1 359.5,441.4 360.5,432.9 361.5,448.4 362.5,443.9 363.5,444.0 364.5,439.0 365.5,432.9 366.5,432.0 367.5,439.7 368.5,443.4 369.5,441.9 370.5,433.4 371.5,436.6 372.5,434.9 373.5,446.9 374.5,439.0 375.5,437.1 376.5,434.9 377.5,445.2 378.5,446.5 379.5,441.4 380.5,433.8 381.5,445.7 382.5,443.6 383.5,436.2 384.5,439.2 385.5,435.1 386.5,442.1 387.5,436.9 388.5,448.2 389.5,428.4 390.5,446.3 391.5,443.5 392.5,436.8 393.5,431.8 394.5,438.8 395.5,445.6 396.5,433.9 397.5,442.2 398.5,442.2 399.5,445.2 400.5,443.1 401.5,439.6 402.5,431.7 403.5,443.6 404.5,436.1 405.5,443.4 406.5,441.9 407.5,416.0 408.5,446.9 409.5,447.4 410.5,433.7 411.5,442.1 412.5,437.9 413.5,446.4 414.5,447.6 415.5,442.6 416.5,443.8 417.5,442.4 418.5,435.1 419.5,401.0 420.5,440.6 421.5,436.9 422.5,446.0 423.5,432.9 424.5,440.9 425.5,439.7 426.5,445.3 427.5,445.1 428.5,437.2 429.5,433.9 430.5,440.3 431.5,457.0 432.5,411.0 433.5,447.6 434.5,435.3 435.5,436.4 436.5,442.4 437.5,445.8 438.5,436.8 439.5,445.9 440.5,435.0 441.5,448.0 442.5,441.2 443.5,440.6 444.5,442.9 445.5,409.0 446.5,438.3 447.5,441.1 448.5,443.2 449.5,440.7 450.5,447.8 451.5,436.1 452.5,433.7 453.5,445.4 454.5,439.6 455.5,434.8 456.5,447.2 457.5,447.6 458.5,434.8 459.5,443.2 460.5,437.5 461.5,433.3 462.5,433.6 463.5,435.8 464.5,440.5 465.5,437.9 466.5,440.5 467.5,435.0 468.5,442.4 469.5,446.0 470.5,446.1 471.5,444.1 472.5,446.8 473.5,436.9 474.5,435.2 475.5,446.6 476.5,435.6 477.5,435.9 478.5,445.6 479.5,444.9 480.5,438.3 481.5,431.8 482.5,443.1 483.5,448.0 484.5,440.1 485.5,440.0 486.5,434.7 487.5,429.3 488.5,440.9 489.5,441.2 490.5,434.6 491.5,445.8 492.5,447.3 493.5,432.6 494.5,439.4 495.5,437.1 496.5,440.3 497.5,442.7 498.5,443.4 499.5,434.6 500.5,444.1 501.5,434.8 502.5,440.3 503.5,446.7 504.5,443.5 505.5,442.2 506.5,441.7 507.5,448.2 508.5,435.9 509.5,444.2 510.5,445.3 511.5,446.7 512.5,443.3 513.5,444.5 514.5,443.8 515.5,437.3 516.5,431.7 517.5,442.4 518.5,435.4 519.5,442.8 520.5,442.7 521.5,440.6 522.5,448.5 523.5,443.4 524.5,453.1 525.5,442.0 526.5,435.9 527.5,432.4 528.5,437.9 529.5,435.8 530.5,440.9 531.5,447.9 532.5,448.4 533.5,445.3 534.5,441.7 535.5,432.3 536.5,434.2 537.5,434.4 538.5,441.9 539.5,447.6 540.5,440.5 541.5,437.7 542.5,442.6 543.5,436.3 544.5,434.5 545.5,435.7 546.5,434.2 547.5,438.1 548.5,444.2 549.5,448.3 550.5,432.7 551.5,438.8 552.5,448.0 553.5,440.4 554.5,443.8 555.5,448.1 556.5,441.8 557.5,442.1 558.5,435.0 559.5,440.5 560.5,439.0 561.5,439.2 562.5,441.4 563.5,444.7 564.5,448.5 565.5,444.0 566.5,433.4 567.5,444.8 568.5,437.6 569.5,443.1 570.5,441.6 571.5,444.3 572.5,435.7 573.5,447.1 574.5,432.2 575.5,436.1 576.5,442.1 577.5,440.7 578.5,433.0 579.5,440.9 580.5,437.8 581.5,435.1 582.5,444.2 583.5,432.8 584.5,445.3 585.5,444.6 586.5,438.7 587.5,445.3 588.5,442.6 589.5,437.0 590.5,444.2 591.5,438.8 592.5,433.1 593.5,432.8 594.5,441.1 595.5,443.2 596.5,444.7 597.5,435.1 598.5,432.9 599.5,443.8 600.5,436.3 601.5,437.6 602.5,437.7 603.5,443.6 604.5,447.1 605.5,447.0 606.5,445.2 607.5,436.9 608.5,447.4 609.5,435.7 610.5,437.7 611.5,438.2 612.5,434.8 613.5,445.1 614.5,445.7 615.5,434.5 616.5,446.5 617.5,431.9 618.5,440.8 619.5,410.0 620.5,445.2 621.5,440.8 622.5,432.9 623.5,444.0 624.5,432.9 625.5,433.9 626.5,442.5 627.5,435.2 628.5,440.4 629.5,438.2 630.5,448.0 631.5,439.9 632.5,443.8 633.5,447.1 634.5,445.5 635.5,446.0 636.5,445.7 637.5,447.8 638.5,440.4 639.5,445.1 640.5,438.6 641.5,444.1 642.5,437.9 643.5,435.0 644.5,436.5 645.5,432.5 646.5,433.5 647.5,444.7 648.5,432.6 649.5,441.4 650.5,432.1 651.5,434.6 652.5,435.5 653.5,441.6 654.5,434.6 655.5,434.4 656.5,436.8 657.5,445.4 658.5,435.9 659.5,447.0 660.5,440.8 661.5,439.7 662.5,432.3 663.5,445.1 664.5,440.5 665.5,436.2 666.5,442.7 667.5,431.7 668.5,437.8 669.5,443.6 670.5,434.2 671.5,437.0 672.5,446.3 673.5,442.3 674.5,436.0 675.5,434.1 676.5,431.5 677.5,445.9 678.5,432.9 679.5,443.7 680.5,439.7 681.5,447.7 682.5,446.1 683.5,444.9 684.5,447.1 685.5,445.5 686.5,440.7 687.5,434.2 688.5,436.8 689.5,432.8 690.5,439.4 691.5,437.6 692.5,433.3 693.5,439.3 694.5,445.6 695.5,431.7 696.5,443.6 697.5,441.1 698.5,431.7 699.5,445.1 700.5,442.0 701.5,437.9 702.5,436.6 703.5,438.2 704.5,435.9 705.5,443.9 706.5,447.6 707.5,443.8 708.5,445.6 709.5,433.9 710.5,443.0 711.5,434.6 712.5,445.7 713.5,433.0 714.5,434.2 715.5,438.4 716.5,447.2 717.5,440.2 718.5,444.5 719.5,438.1 720.5,437.6 721.5,438.3 722.5,448.2 723.5,442.7 724.5,431.8 725.5,437.3 726.5,433.3 727.5,440.2 728.5,445.5 729.5,434.2 730.5,446.9 731.5,437.5 732.5,433.9 733.5,448.3 734.5,443.7 735.5,434.9 736.5,442.2 737.5,432.9 738.5,441.3 739.5,437.1 740.5,402.0 741.5,433.6 742.5,433.8 743.5,440.7 744.5,441.0 745.5,433.9 746.5,428.4 747.5,429.3 748.5,425.8 749.5,428.9 750.5,430.9 751.5,428.0 752.5,431.7 753.5,429.7 754.5,430.9 755.5,429.5 756.5,426.6 757.5,424.9 758.5,424.4 759.5,425.8 760.5,425.9 761.5,431.1 762.5,429.3 763.5,427.6 764.5,425.9 765.5,424.7 766.5,422.5 767.5,421.9 768.5,425.8 769.5,426.7 770.5,434.0 771.5,433.4 772.5,437.7 773.5,437.2 774.5,437.7 775.5,439.3 776.5,438.7 777.5,441.6 778.5,436.7 779.5,438.2 780.5,439.6 781.5,436.9 782.5,440.4 783.5,436.1 784.5,437.7 785.5,437.3 786.5,436.3 787.5,435.2 788.5,439.3 789.5,439.3 790.5,439.5 791.5,437.9 792.5,433.2 793.5,437.0 794.5,432.5 795.5,437.3 796.5,435.1 797.5,434.4 798.5,441.1 799.5,405.0 800.5,424.4 801.5,408.0 802.5,423.7 803.5,425.1 804.5,430.6 805.5,422.3 806.5,420.1 807.5,426.4 808.5,429.4 809.5,431.2 810.5,432.4 811.5,430.4 812.5,428.9 813.5,427.9 814.5,429.9 815.5,428.0 816.5,428.2 817.5,432.2 818.5,426.4 819.5,423.5 820.5,399.0 821.5,424.7 822.5,424.3 823.5,431.5 824.5,431.1 825.5,428.0 826.5,430.9 827.5,437.7 828.5,430.4 829.5,426.6 830.5,426.6 831.5,424.0 832.5,431.6 833.5,431.5 834.5,428.4 835.5,429.1 836.5,425.2 837.5,423.1 838.5,424.0 839.5,432.3 840.5,422.7 841.5,424.8 842.5,429.4 843.5,430.7 844.5,435.6 845.5,434.1 846.5,432.1 847.5,429.6 848.5,425.5 849.5,430.8 850.5,425.2 851.5,424.7 852.5,423.0 853.5,420.9 854.5,414.6 855.5,416.2 856.5,419.1 857.5,421.3 858.5,425.2 859.5,424.6 860.5,422.5 861.5,424.3 862.5,426.7 863.5,423.2 864.5,418.6 865.5,416.9 866.5,422.7 867.5,426.7 868.5,423.3 869.5,424.1 870.5,427.2 871.5,431.1 872.5,427.1 873.5,425.7 874.5,430.3 875.5,436.9 876.5,438.8 877.5,431.1 878.5,430.9 879.5,428.2 880.5,427.1 881.5,424.3 882.5,422.9 883.5,423.4 884.5,430.0 885.5,430.9 886.5,430.7 887.5,429.2 888.5,425.5 889.5,424.6 890.5,428.9 891.5,430.6 892.5,435.7 893.5,433.6 894.5,431.1 895.5,423.9 896.5,425.6 897.5,419.6 898.5,426.3 899.5,423.8 900.5,419.1 901.5,414.8 902.5,414.6 903.5,413.0 904.5,418.7 905.5,419.9 906.5,416.0 907.5,410.6 908.5,413.0 909.5,413.3 910.5,411.4 911.5,415.8 912.5,416.4 913.5,417.8 914.5,416.4 915.5,415.5 916.5,415.2 917.5,411.1 918.5,415.7 919.5,418.3 920.5,413.0 921.5,415.3 922.5,420.5 923.5,421.2 924.5,425.2 925.5,422.8 926.5,422.1 927.5,417.1 928.5,414.9 929.5,410.1 930.5,409.9 931.5,413.5 932.5,417.1 933.5,421.8 934.5,421.8 935.5,417.9 936.5,420.0 937.5,419.5 938.5,425.6 939.5,430.7 940.5,430.9 941.5,424.0 942.5,421.1 943.5,421.5 944.5,418.6 945.5,420.8 946.5,422.9 947.5,424.9 948.5,424.3 949.5,420.1 950.5,417.2 951.5,417.6 952.5,422.7 953.5,427.3 954.5,428.6 955.5,427.4 956.5,427.6 957.5,428.2 958.5,430.3 959.5,430.3 960.5,422.2 961.5,424.8 962.5,424.8 963.5,421.9 964.5,423.1 965.5,423.2 966.5,422.1 967.5,415.8 968.5,417.4 969.5,420.0 970.5,419.8 971.5,414.5 972.5,417.6 973.5,420.7 974.5,421.1 975.5,422.2 976.5,420.4 977.5,418.1 978.5,420.4 979.5,419.1 980.5,420.0 981.5,431.0 982.5,430.3 983.5,427.9 984.5,420.2 985.5,420.5 986.5,422.9 987.5,419.7 988.5,419.0 989.5,411.7 990.5,415.9 991.5,415.0 992.5,418.7 993.5,423.7 994.5,422.1 995.5,424.8 996.5,424.3 997.5,422.4 998.5,420.8 999.5,417.7 1000.5,422.7 1001.5,424.9 1002.5,420.1 1003.5,422.9 1004.5,419.7 1005.5,414.7 1006.5,420.2 1007.5,415.8 1008.5,421.0 1009.5,421.4 1010.5,424.0 1011.5,424.6 1012.5,427.2 1013.5,426.4 1014.5,426.5 1015.5,425.6 1016.5,427.7 1017.5,424.2 1018.5,426.5 1019.5,429.7 1020.5,410.0 1021.5,426.4 1022.5,422.9 1023.5,421.1 1024.5,421.7 1025.5,420.0 1026.5,417.0 1027.5,417.8 1028.5,419.0 1029.5,407.0 1030.5,422.7 1031.5,415.9 1032.5,421.8 1033.5,420.8 1034.5,417.9 1035.5,417.3 1036.5,419.5 1037.5,422.6 1038.5,420.6 1039.5,421.0 1040.5,415.3 1041.5,417.2 1042.5,417.6 1043.5,416.8 1044.5,420.7 1045.5,426.6 1046.5,428.2 1047.5,423.3 1048.5,427.5 1049.5,424.3 1050.5,422.9 1051.5,420.2 1052.5,421.7 1053.5,423.1 1054.5,422.7 1055.5,421.2 1056.5,420.4 1057.5,418.9 1058.5,422.5 1059.5,420.1 1060.5,419.5 1061.5,419.0 1062.5,416.7 1063.5,416.9 1064.5,412.8 1065.5,416.2 1066.5,419.1 1067.5,418.3 1068.5,424.0 1069.5,420.1 1070.5,422.0 1071.5,423.0 1072.5,420.4 1073.5,419.5 1074.5,422.3 1075.5,421.8 1076.5,422.2 1077.5,425.7 1078.5,424.8 1079.5,418.4 1080.5,416.7 1081.5,420.1 1082.5,419.7 1083.5,416.6 1084.5,411.6 1085.5,414.9 1086.5,420.8 1087.5,416.9 1088.5,411.3 1089.5,415.2 1090.5,414.9 1091.5,415.5 1092.5,415.8 1093.5,414.3 1094.5,417.2 1095.5,420.7 1096.5,421.6 1097.5,419.5 1098.5,422.7 1099.5,421.6 1100.5,422.9 1101.5,419.3 1102.5,421.5 1103.5,423.3 1104.5,426.2 1105.5,424.5 1106.5,424.6 1107.5,421.6 1108.5,423.8 1109.5,425.0 1110.5,426.8 1111.5,423.8 1112.5,419.1 1113.5,419.1 1114.5,418.8 1115.5,416.9 1116.5,419.6 1117.5,422.5 1118.5,423.0 1119.5,425.5 1120.5,425.1 1121.5,420.8 1122.5,418.8 1123.5,418.1 1124.5,420.7 1125.5,423.2 1126.5,422.7 1127.5,425.0 1128.5,421.1 1129.5,420.5 1130.5,424.8 1131.5,424.8 1132.5,426.5 1133.5,419.1 1134.5,414.4 1135.5,413.4 1136.5,418.3 1137.5,423.6 1138.5,420.7 1139.5,417.6 1140.5,415.3 1141.5,414.0 1142.5,417.3 1143.5,417.1 1144.5,423.5 1145.5,424.7 1146.5,421.3 1147.5,421.7 1148.5,420.8 1149.5,422.9 1150.5,424.8 1151.5,422.4 1152.5,424.4 1153.5,424.8 1154.5,423.2 1155.5,423.1 1156.5,424.3 1157.5,422.1 1158.5,419.5 1159.5,423.4 1160.5,422.5 1161.5,420.1 1162.5,421.4 1163.5,416.7 1164.5,417.8 1165.5,414.4 1166.5,414.7 1167.5,410.9 1168.5,411.4 1169.5,416.4 1170.5,416.9 1171.5,414.2 1172.5,421.0 1173.5,418.8 1174.5,423.6 1175.5,421.0 1176.5,416.4 1177.5,422.9 1178.5,420.8 1179.5,422.8 1180.5,425.6 1181.5,420.2 1182.5,420.3 1183.5,418.6 1184.5,420.8 1185.5,420.5 1186.5,419.3 1187.5,421.8 1188.5,425.7 1189.5,426.6 1190.5,429.6 1191.5,429.8 1192.5,431.5 1193.5,434.1 1194.5,436.0 1195.5,432.0 1196.5,432.2 1197.5,442.1 1198.5,432.9 1199.5,443.5 1200.5,434.3 1201.5,442.4 1202.5,441.2 1203.5,441.2 1204.5,435.5 1205.5,443.1 1206.5,439.0 1207.5,441.1 1208.5,443.0 1209.5,432.4 1210.5,440.5 1211.5,430.4 1212.5,439.3 1213.5,445.1 1214.5,440.8 1215.5,440.0 1216.5,444.5 1217.5,431.2 1218.5,432.3 1219.5,434.8 1220.5,445.4 1221.5,399.0 1222.5,438.6 1223.5,436.1 1224.5,442.5 1225.5,434.8 1226.5,439.8 1227.5,445.2 1228.5,440.9 1229.5,442.5 1230.5,433.1 1231.5,444.5 1232.5,437.8 1233.5,433.8 1234.5,439.0 1235.5,439.9 1236.5,433.9 1237.5,436.0 1238.5,431.3 1239.5,443.9 1240.5,431.7 1241.5,437.8 1242.5,433.5 1243.5,437.8 1244.5,442.6 1245.5,431.4 1246.5,440.4 1247.5,434.7 1248.5,443.5 1249.5,437.1 1250.5,441.4 1251.5,430.9 1252.5,432.3 1253.5,435.9 1254.5,435.2 1255.5,430.7 1256.5,449.0 1257.5,438.4 1258.5,442.4 1259.5,436.5 1260.5,442.9 1261.5,445.3 1262.5,444.8 1263.5,441.1 1264.5,447.8 1265.5,439.2 1266.5,436.3 1267.5,440.4 1268.5,436.0 1269.5,435.8 1270.5,444.1 1271.5,431.9 1272.5,441.6 1273.5,441.6 1274.5,440.7 1275.5,432.1 1276.5,435.8 1277.5,430.6 1278.5,436.6 1279.5,438.6 1280.5,433.6 1281.5,435.3 1282.5,432.1 1283.5,437.0 1284.5,433.8 1285.5,441.1 1286.5,434.6 1287.5,444.7 1288.5,433.3 1289.5,445.3 1290.5,440.0 1291.5,440.2 1292.5,439.7 1293.5,443.3 1294.5,438.1 1295.5,432.2 1296.5,440.8 1297.5,440.5 1298.5,436.3 1299.5,439.5 1300.5,425.0 1301.5,439.9 1302.5,439.4 1303.5,444.5 1304.5,437.5 1305.5,441.6 1306.5,441.6 1307.5,436.5 1308.5,432.4 1309.5,437.9 1310.5,443.1 1311.5,444.6 1312.5,442.5 1313.5,445.4 1314.5,443.6 1315.5,434.3 1316.5,437.3 1317.5,443.5 1318.5,434.7 1319.5,431.6 1320.5,442.3 1321.5,434.1 1322.5,443.3 1323.5,438.7 1324.5,442.5 1325.5,436.0 1326.5,431.1 1327.5,443.5 1328.5,432.3 1329.5,436.3 1330.5,439.8 1331.5,431.6 1332.5,433.6 1333.5,443.6 1334.5,433.5 1335.5,436.3 1336.5,435.6 1337.5,439.9 1338.5,439.5 1339.5,433.2 1340.5,440.9 1341.5,432.4 1342.5,444.6 1343.5,435.9 1344.5,445.4 1345.5,441.5 1346.5,435.2 1347.5,432.7 1348.5,436.9 1349.5,436.6 1350.5,438.1 1351.5,435.7 1352.5,434.0 1353.5,434.8 1354.5,434.8 1355.5,440.7 1356.5,444.5 1357.5,441.6 1358.5,437.2 1359.5,436.8 1360.5,437.1 1361.5,434.9 1362.5,440.6 1363.5,436.7 1364.5,443.9 1365.5,436.8 1366.5,442.8 1367.5,439.4 1368.5,432.0 1369.5,431.8 1370.5,436.1 1371.5,440.5 1372.5,444.0 1373.5,430.8 1374.5,436.6 1375.5,434.6 1376.5,430.8 1377.5,428.8 1378.5,425.4 1379.5,421.4 1380.5,423.6 1381.5,419.6 1382.5,420.9 1383.5,420.3 1384.5,421.0 1385.5,418.5 1386.5,417.1 1387.5,412.6 1388.5,415.9 1389.5,417.5 1390.5,416.1 1391.5,418.2 1392.5,419.3 1393.5,423.7 1394.5,422.7 1395.5,423.1 1396.5,422.9 1397.5,423.0 1398.5,421.8 1399.5,420.4 1400.5,421.1 1401.5,422.4 1402.5,419.7 1403.5,420.1 1404.5,422.8 1405.5,428.2 1406.5,429.7 1407.5,429.1 1408.5,433.2 1409.5,436.8 1410.5,429.8 1411.5,445.6 1412.5,429.9 1413.5,438.6 1414.5,431.4 1415.5,434.6 1416.5,431.6 1417.5,431.7 1418.5,438.2 1419.5,442.7 1420.5,436.5 1421.5,408.0 1422.5,439.0 1423.5,444.0 1424.5,444.0 1425.5,446.0 1426.5,436.4 1427.5,444.2 1428.5,435.6 1429.5,432.1 1430.5,442.0 1431.5,432.2 1432.5,430.0 1433.5,434.6 1434.5,440.4 1435.5,430.3 1436.5,430.8 1437.5,431.4 1438.5,435.1 1439.5,440.6 1440.5,445.6 1441.5,438.0 1442.5,436.2 1443.5,442.1 1444.5,435.8 1445.5,437.6 1446.5,436.8 1447.5,430.3 1448.5,430.5 1449.5,438.8 1450.5,433.3 1451.5,435.8 1452.5,437.7 1453.5,442.2 1454.5,429.7 1455.5,450.7 1456.5,439.6 1457.5,435.7 1458.5,435.8 1459.5,439.9 1460.5,434.9 1461.5,438.3 1462.5,430.4 1463.5,433.8 1464.5,443.0 1465.5,444.1 1466.5,434.4 1467.5,431.0 1468.5,443.6 1469.5,434.9 1470.5,442.9 1471.5,430.5 1472.5,430.3 1473.5,438.9 1474.5,441.8 1475.5,445.4 1476.5,440.2 1477.5,442.0 1478.5,441.1 1479.5,412.0 1480.5,442.8 1481.5,442.3 1482.5,437.1 1483.5,418.0 1484.5,442.0 1485.5,431.5 1486.5,440.8 1487.5,431.4 1488.5,414.0 1489.5,439.0 1490.5,433.1 1491.5,438.6 1492.5,431.6 1493.5,437.2 1494.5,436.8 1495.5,441.0 1496.5,437.9 1497.5,436.1 1498.5,431.3 1499.5,432.3 1500.5,432.9 1501.5,432.3 1502.5,439.6 1503.5,436.1 1504.5,443.8 1505.5,439.4 1506.5,446.2 1507.5,441.4 1508.5,433.9 1509.5,439.3 1510.5,430.6 1511.5,435.9 1512.5,436.9 1513.5,439.0 1514.5,445.0 1515.5,437.8 1516.5,442.3 1517.5,434.7 1518.5,430.1 1519.5,439.2 1520.5,435.2 1521.5,445.7 1522.5,443.2 1523.5,442.8 1524.5,432.9 1525.5,439.9 1526.5,442.5 1527.5,444.8 1528.5,441.2 1529.5,445.7 1530.5,434.4 1531.5,441.9 1532.5,431.2 1533.5,438.6 1534.5,434.5 1535.5,431.7 1536.5,434.1 1537.5,434.2 1538.5,444.4 1539.5,444.1 1540.5,439.9 1541.5,442.0 1542.5,440.7 1543.5,442.7 1544.5,430.4 1545.5,420.0 1546.5,433.5 1547.5,435.8 1548.5,445.5 1549.5,439.1 1550.5,433.4 1551.5,431.4 1552.5,440.7 1553.5,444.8 1554.5,439.1 1555.5,446.3 1556.5,444.3 1557.5,440.8 1558.5,430.0 1559.5,446.2 1560.5,444.0 1561.5,438.4 1562.5,438.5 1563.5,438.5 1564.5,438.0 1565.5,441.5 1566.5,437.8 1567.5,437.8 1568.5,446.0 1569.5,431.8 1570.5,435.2 1571.5,445.5 1572.5,445.6 1573.5,444.1 1574.5,429.8 1575.5,439.5 1576.5,439.9 1577.5,445.4 1578.5,438.3 1579.5,430.0 1580.5,444.3 1581.5,425.1 1582.5,443.6 1583.5,438.3 1584.5,442.4 1585.5,429.5 1586.5,443.0 1587.5,443.7 1588.5,435.2 1589.5,429.8 1590.5,434.0 1591.5,438.4 1592.5,441.0 1593.5,433.5 1594.5,432.5 1595.5,433.8 1596.5,442.8 1597.5,433.6 1598.5,433.9 1599.5,433.8 1600.5,432.6 1601.5,434.6 1602.5,441.8 1603.5,442.9 1604.5,430.8 1605.5,433.7 1606.5,436.5 1607.5,435.8 1608.5,445.0 1609.5,436.1 1610.5,442.9 1611.5,435.2 1612.5,436.0 1613.5,439.6 1614.5,437.6 1615.5,429.7 1616.5,436.0 1617.5,445.0 1618.5,433.0 1619.5,445.8 1620.5,435.3 1621.5,431.9 1622.5,401.0 1623.5,431.8 1624.5,444.5 1625.5,445.6 1626.5,435.8 1627.5,434.1 1628.5,430.7 1629.5,435.4 1630.5,434.7 1631.5,431.6 1632.5,438.7 1633.5,442.5 1634.5,445.6 1635.5,433.3 1636.5,434.8 1637.5,445.2 1638.5,432.2 1639.5,439.2 1640.5,443.0 1641.5,437.3 1642.5,443.9 1643.5,432.7 1644.5,451.0 1645.5,442.5 1646.5,430.4 1647.5,432.4 1648.5,430.2 1649.5,433.2 1650.5,422.0 1651.5,437.4 1652.5,429.8 1653.5,430.2 1654.5,440.0 1655.5,437.5 1656.5,434.9 1657.5,444.5 1658.5,436.6 1659.5,437.3 1660.5,445.0 1661.5,445.4 1662.5,444.5 1663.5,438.2 1664.5,434.4 1665.5,441.8 1666.5,439.4 1667.5,445.6 1668.5,431.1 1669.5,435.4 1670.5,438.0 1671.5,438.2 1672.5,429.5 1673.5,434.1 1674.5,440.2 1675.5,431.0 1676.5,437.7 1677.5,446.0 1678.5,437.0 1679.5,443.1 1680.5,443.6 1681.5,433.8 1682.5,438.1 1683.5,438.9 1684.5,437.8 1685.5,434.4 1686.5,438.1 1687.5,432.8 1688.5,443.7 1689.5,446.1 1690.5,441.1 1691.5,441.6 1692.5,443.1 1693.5,443.4 1694.5,433.6 1695.5,429.9 1696.5,435.3 1697.5,439.9 1698.5,445.4 1699.5,430.6 1700.5,421.0 1701.5,444.3 1702.5,432.7 1703.5,442.4 1704.5,440.1 1705.5,441.9 1706.5,444.3 1707.5,442.9 1708.5,439.2 1709.5,440.4 1710.5,436.0 1711.5,429.9 1712.5,443.0 1713.5,440.6 1714.5,441.3 1715.5,434.9 1716.5,432.7 1717.5,405.0 1718.5,435.1 1719.5,445.0 1720.5,445.7 1721.5,445.9 1722.5,435.2 1723.5,438.4 1724.5,430.1 1725.5,438.6 1726.5,442.2 1727.5,432.9 1728.5,433.6 1729.5,430.7 1730.5,435.5 1731.5,445.6 1732.5,436.5 1733.5,433.5 1734.5,445.8 1735.5,436.9 1736.5,442.5 1737.5,440.4 1738.5,444.8 1739.5,438.7 1740.5,438.5 1741.5,442.5 1742.5,432.1 1743.5,434.1 1744.5,441.9 1745.5,442.5 1746.5,441.5 1747.5,436.9 1748.5,437.6 1749.5,444.6 1750.5,430.7 1751.5,441.3 1752.5,431.7 1753.5,439.2 1754.5,436.4 1755.5,441.1 1756.5,430.3 1757.5,431.7 1758.5,437.3 1759.5,430.7 1760.5,437.5 1761.5,445.7 1762.5,437.8 1763.5,434.9 1764.5,431.5 1765.5,433.3 1766.5,438.1 1767.5,436.3 1768.5,433.9 1769.5,441.5 1770.5,435.7 1771.5,437.2 1772.5,440.1 1773.5,434.7 1774.5,437.2 1775.5,444.5 1776.5,435.9 1777.5,446.1 1778.5,436.3 1779.5,442.1 1780.5,441.8 1781.5,440.6 1782.5,436.9 1783.5,433.3 1784.5,438.7 1785.5,435.3 1786.5,429.8 1787.5,442.5 1788.5,439.9 1789.5,436.3 1790.5,432.8 1791.5,430.5 1792.5,443.5 1793.5,436.2 1794.5,441.6 1795.5,442.2 1796.5,433.8 1797.5,439.0 1798.5,446.3 1799.5,442.8 1800.5,441.9 1801.5,434.2 1802.5,438.5 1803.5,432.3 1804.5,444.7 1805.5,434.4 1806.5,436.6 1807.5,439.8 1808.5,438.5 1809.5,439.2 1810.5,435.5 1811.5,430.8 1812.5,441.3 1813.5,443.6 1814.5,434.2 1815.5,439.0 1816.5,435.9 1817.5,432.0 1818.5,444.3 1819.5,433.7 1820.5,431.5 1821.5,443.0 1822.5,411.0 1823.5,443.3 1824.5,443.4 1825.5,433.1 1826.5,441.4 1827.5,444.4 1828.5,437.6 1829.5,437.0 1830.5,439.2 1831.5,446.3 1832.5,433.3 1833.5,432.1 1834.5,435.3 1835.5,436.8 1836.5,445.1 1837.5,432.4 1838.5,441.5 1839.5,444.5 1840.5,433.4 1841.5,433.4 1842.5,430.3 1843.5,430.6 1844.5,438.7 1845.5,431.1 1846.5,435.5 1847.5,439.7 1848.5,430.6 1849.5,429.9 1850.5,432.5 1851.5,440.8 1852.5,435.0 1853.5,434.4 1854.5,435.5 1855.5,433.7 1856.5,431.5 1857.5,434.8 1858.5,434.1 1859.5,443.9 1860.5,438.2 1861.5,444.6 1862.5,440.1 1863.5,441.3 1864.5,436.5 1865.5,438.1 1866.5,438.5 1867.5,442.9 1868.5,430.5 1869.5,432.6 1870.5,443.0 1871.5,434.4 1872.5,444.3 1873.5,441.1 1874.5,442.2 1875.5,436.3 1876.5,444.5 1877.5,445.1 1878.5,470.0 1879.5,470.0"/></svg>
<div class="a" style="left:325px;top:148px;width:291px;height:30px;background:#050505;border-radius:4px"></div>
<div class="t mono" style="left:341px;top:154px;font-size:19px;color:#fff">-63</div>
<div class="t mono" style="left:382px;top:160px;font-size:12px;color:#fff">dBm</div>
<svg class="a" style="left:405px;top:148px" width="215" height="30">
<defs><linearGradient id="mg" x1="0" x2="1"><stop offset="0" stop-color="#2a2a2a"/><stop offset="1" stop-color="#d8d030"/></linearGradient></defs>
<rect x="6" y="3" width="59" height="7" fill="url(#mg)"/>
<circle cx="115.5" cy="7" r="3" fill="#f0f000"/>
<path d="M6 16.5 H206" stroke="#e02020" stroke-width="1"/>
<g font-family="Liberation Mono" font-size="8.5" fill="#e8e8e8">
<text x="34" y="27" text-anchor="middle">-120</text><text x="63" y="27" text-anchor="middle">-100</text><text x="92" y="27" text-anchor="middle">-80</text><text x="121" y="27" text-anchor="middle">-60</text><text x="149" y="27" text-anchor="middle">-40</text><text x="178" y="27" text-anchor="middle">-20</text>
</g>
<path d="M34 15 v2 M63 15 v2 M92 15 v2 M121 15 v2 M149 15 v2 M178 15 v2" stroke="#e02020"/>
</svg>
<div class="a" style="left:268px;top:479px;width:1612px;height:21px;background:linear-gradient(#8a8a8a 0,#8a8a8a 1px,#6a6a6a 1px,#4a4a4a 9px,#3a3a3a 11px,#000 11px)"></div>
<svg class="a" style="left:0;top:470px" width="1920" height="40"><path d="M273.5 10 v2 M286.5 10 v4.5 M299.5 10 v2 M312.5 10 v3.5 M325.5 10 v2 M338.5 10 v3.5 M352.5 10 v2 M365.5 10 v3.5 M378.5 10 v2 M391.5 10 v3.5 M404.5 10 v2 M417.5 10 v4.5 M430.5 10 v2 M443.5 10 v3.5 M457.5 10 v2 M470.5 10 v3.5 M483.5 10 v2 M496.5 10 v3.5 M509.5 10 v2 M522.5 10 v3.5 M535.5 10 v2 M549.5 10 v4.5 M562.5 10 v2 M575.5 10 v3.5 M588.5 10 v2 M601.5 10 v3.5 M614.5 10 v2 M627.5 10 v3.5 M641.5 10 v2 M654.5 10 v3.5 M667.5 10 v2 M680.5 10 v4.5 M693.5 10 v2 M706.5 10 v3.5 M719.5 10 v2 M733.5 10 v3.5 M746.5 10 v2 M759.5 10 v3.5 M772.5 10 v2 M785.5 10 v3.5 M798.5 10 v2 M811.5 10 v4.5 M825.5 10 v2 M838.5 10 v3.5 M851.5 10 v2 M864.5 10 v3.5 M877.5 10 v2 M890.5 10 v3.5 M903.5 10 v2 M917.5 10 v3.5 M930.5 10 v2 M943.5 10 v4.5 M956.5 10 v2 M969.5 10 v3.5 M982.5 10 v2 M995.5 10 v3.5 M1008.5 10 v2 M1022.5 10 v3.5 M1035.5 10 v2 M1048.5 10 v3.5 M1061.5 10 v2 M1074.5 10 v4.5 M1087.5 10 v2 M1100.5 10 v3.5 M1114.5 10 v2 M1127.5 10 v3.5 M1140.5 10 v2 M1153.5 10 v3.5 M1166.5 10 v2 M1179.5 10 v3.5 M1192.5 10 v2 M1206.5 10 v4.5 M1219.5 10 v2 M1232.5 10 v3.5 M1245.5 10 v2 M1258.5 10 v3.5 M1271.5 10 v2 M1284.5 10 v3.5 M1298.5 10 v2 M1311.5 10 v3.5 M1324.5 10 v2 M1337.5 10 v4.5 M1350.5 10 v2 M1363.5 10 v3.5 M1376.5 10 v2 M1390.5 10 v3.5 M1403.5 10 v2 M1416.5 10 v3.5 M1429.5 10 v2 M1442.5 10 v3.5 M1455.5 10 v2 M1468.5 10 v4.5 M1482.5 10 v2 M1495.5 10 v3.5 M1508.5 10 v2 M1521.5 10 v3.5 M1534.5 10 v2 M1547.5 10 v3.5 M1560.5 10 v2 M1574.5 10 v3.5 M1587.5 10 v2 M1600.5 10 v4.5 M1613.5 10 v2 M1626.5 10 v3.5 M1639.5 10 v2 M1652.5 10 v3.5 M1666.5 10 v2 M1679.5 10 v3.5 M1692.5 10 v2 M1705.5 10 v3.5 M1718.5 10 v2 M1731.5 10 v4.5 M1744.5 10 v2 M1757.5 10 v3.5 M1771.5 10 v2 M1784.5 10 v3.5 M1797.5 10 v2 M1810.5 10 v3.5 M1823.5 10 v2 M1836.5 10 v3.5 M1849.5 10 v2 M1863.5 10 v4.5 M1876.5 10 v2" stroke="#a0a0a0" stroke-width="1.3"/><g font-family="Liberation Sans" font-size="9.9" fill="#fff"><text x="268.0" y="26.2" text-anchor="start">433.880</text><text x="417.2" y="26.2" text-anchor="middle">433.900</text><text x="548.6" y="26.2" text-anchor="middle">433.920</text><text x="680.0" y="26.2" text-anchor="middle">433.940</text><text x="811.4" y="26.2" text-anchor="middle">433.960</text><text x="942.8" y="26.2" text-anchor="middle">433.980</text><text x="1074.2" y="26.2" text-anchor="middle">434.000</text><text x="1205.6" y="26.2" text-anchor="middle">434.020</text><text x="1337.0" y="26.2" text-anchor="middle">434.040</text><text x="1468.4" y="26.2" text-anchor="middle">434.060</text><text x="1599.8" y="26.2" text-anchor="middle">434.080</text><text x="1731.2" y="26.2" text-anchor="middle">434.100</text><text x="1879.0" y="26.2" text-anchor="end">434.120</text></g></svg>
<div class="a" style="left:268px;top:500px;width:1612px;height:6px;background:#f0f0f0;border-top:1px solid #fff"></div>
<div class="a" style="left:1043px;top:502px;width:63px;height:2px;background:repeating-linear-gradient(90deg,#555 0,#555 2px,transparent 2px,transparent 4px)"></div>
<div class="a" style="left:268px;top:506px;width:1612px;height:490px;background:#020222"></div>
<svg class="a" style="left:0;top:0" width="1920" height="1000"><defs>
<linearGradient id="fzl" x1="0" x2="1"><stop offset="0" stop-color="#5270d2" stop-opacity="0"/><stop offset="0.6" stop-color="#4a64c0" stop-opacity="0.45"/><stop offset="1" stop-color="#5270d2" stop-opacity="1"/></linearGradient>
<linearGradient id="fzr" x1="0" x2="1"><stop offset="0" stop-color="#5270d2" stop-opacity="1"/><stop offset="0.35" stop-color="#4a64c0" stop-opacity="0.45"/><stop offset="1" stop-color="#5270d2" stop-opacity="0"/></linearGradient>
<linearGradient id="bbl" x1="0" x2="1"><stop offset="0" stop-color="#5a7ae0" stop-opacity="0"/><stop offset="1" stop-color="#5a7ae0" stop-opacity="1"/></linearGradient>
<linearGradient id="bbr" x1="0" x2="1"><stop offset="0" stop-color="#5a7ae0" stop-opacity="1"/><stop offset="1" stop-color="#5a7ae0" stop-opacity="0"/></linearGradient>
<pattern id="vstr" width="37" height="10" patternUnits="userSpaceOnUse">
<rect x="3" width="2" height="10" fill="#1a2a70" opacity="0.18"/><rect x="11" width="1" height="10" fill="#1a2a70" opacity="0.25"/><rect x="17" width="3" height="10" fill="#8aa0ff" opacity="0.08"/><rect x="26" width="1" height="10" fill="#1a2a70" opacity="0.2"/><rect x="31" width="2" height="10" fill="#1a2a70" opacity="0.12"/>
</pattern>
<radialGradient id="circ" cx="50%" cy="50%" r="50%"><stop offset="0.85" stop-color="#6a88e8" stop-opacity="0"/><stop offset="0.95" stop-color="#6a88e8" stop-opacity="0.35"/><stop offset="1" stop-color="#3a50a8" stop-opacity="0.3"/></radialGradient>
<filter id="blur1" x="-20%" y="-20%" width="140%" height="140%"><feGaussianBlur stdDeviation="2.5"/></filter>
<filter id="blur2" x="-20%" y="-20%" width="140%" height="140%"><feGaussianBlur stdDeviation="1.2"/></filter><filter id="blur3" x="-20%" y="-20%" width="140%" height="140%"><feGaussianBlur stdDeviation="2"/></filter>
</defs><linearGradient id="cols" x1="0" x2="1"><stop offset="0.00" stop-color="#000a40" stop-opacity="0.05"/><stop offset="0.02" stop-color="#000a40" stop-opacity="0.03"/><stop offset="0.04" stop-color="#000a40" stop-opacity="0.03"/><stop offset="0.06" stop-color="#000a40" stop-opacity="0.01"/><stop offset="0.08" stop-color="#000a40" stop-opacity="0.03"/><stop offset="0.10" stop-color="#000a40" stop-opacity="0.01"/><stop offset="0.12" stop-color="#000a40" stop-opacity="0.12"/><stop offset="0.14" stop-color="#000a40" stop-opacity="0.07"/><stop offset="0.16" stop-color="#000a40" stop-opacity="0.01"/><stop offset="0.18" stop-color="#000a40" stop-opacity="0.04"/><stop offset="0.20" stop-color="#000a40" stop-opacity="0.01"/><stop offset="0.22" stop-color="#000a40" stop-opacity="0.11"/><stop offset="0.24" stop-color="#000a40" stop-opacity="0.07"/><stop offset="0.26" stop-color="#000a40" stop-opacity="0.09"/><stop offset="0.28" stop-color="#000a40" stop-opacity="0.06"/><stop offset="0.30" stop-color="#000a40" stop-opacity="0.05"/><stop offset="0.32" stop-color="#000a40" stop-opacity="0.12"/><stop offset="0.34" stop-color="#000a40" stop-opacity="0.10"/><stop offset="0.36" stop-color="#000a40" stop-opacity="0.09"/><stop offset="0.38" stop-color="#000a40" stop-opacity="0.01"/><stop offset="0.40" stop-color="#000a40" stop-opacity="0.03"/><stop offset="0.42" stop-color="#000a40" stop-opacity="0.11"/><stop offset="0.44" stop-color="#000a40" stop-opacity="0.03"/><stop offset="0.46" stop-color="#000a40" stop-opacity="0.11"/><stop offset="0.48" stop-color="#000a40" stop-opacity="0.05"/><stop offset="0.50" stop-color="#000a40" stop-opacity="0.11"/><stop offset="0.52" stop-color="#000a40" stop-opacity="0.13"/><stop offset="0.54" stop-color="#000a40" stop-opacity="0.02"/><stop offset="0.56" stop-color="#000a40" stop-opacity="0.10"/><stop offset="0.58" stop-color="#000a40" stop-opacity="0.10"/><stop offset="0.60" stop-color="#000a40" stop-opacity="0.00"/><stop offset="0.62" stop-color="#000a40" stop-opacity="0.02"/><stop offset="0.64" stop-color="#000a40" stop-opacity="0.09"/><stop offset="0.66" stop-color="#000a40" stop-opacity="0.00"/><stop offset="0.68" stop-color="#000a40" stop-opacity="0.06"/><stop offset="0.70" stop-color="#000a40" stop-opacity="0.04"/><stop offset="0.72" stop-color="#000a40" stop-opacity="0.10"/><stop offset="0.74" stop-color="#000a40" stop-opacity="0.01"/><stop offset="0.76" stop-color="#000a40" stop-opacity="0.04"/><stop offset="0.78" stop-color="#000a40" stop-opacity="0.00"/><stop offset="0.80" stop-color="#000a40" stop-opacity="0.01"/><stop offset="0.82" stop-color="#000a40" stop-opacity="0.09"/><stop offset="0.84" stop-color="#000a40" stop-opacity="0.08"/><stop offset="0.86" stop-color="#000a40" stop-opacity="0.11"/><stop offset="0.88" stop-color="#000a40" stop-opacity="0.11"/><stop offset="0.90" stop-color="#000a40" stop-opacity="0.12"/><stop offset="0.92" stop-color="#000a40" stop-opacity="0.09"/><stop offset="0.94" stop-color="#000a40" stop-opacity="0.05"/><stop offset="0.96" stop-color="#000a40" stop-opacity="0.13"/><stop offset="0.98" stop-color="#000a40" stop-opacity="0.04"/><stop offset="1.00" stop-color="#000a40" stop-opacity="0.08"/></linearGradient><linearGradient id="cols2" x1="0" x2="1"><stop offset="0.000" stop-color="#0a1450" stop-opacity="0.02"/><stop offset="0.003" stop-color="#0a1450" stop-opacity="0.11"/><stop offset="0.006" stop-color="#0a1450" stop-opacity="0.04"/><stop offset="0.009" stop-color="#0a1450" stop-opacity="0.02"/><stop offset="0.012" stop-color="#0a1450" stop-opacity="0.04"/><stop offset="0.015" stop-color="#0a1450" stop-opacity="0.08"/><stop offset="0.018" stop-color="#0a1450" stop-opacity="0.00"/><stop offset="0.021" stop-color="#0a1450" stop-opacity="0.15"/><stop offset="0.024" stop-color="#0a1450" stop-opacity="0.00"/><stop offset="0.027" stop-color="#0a1450" stop-opacity="0.09"/><stop offset="0.030" stop-color="#0a1450" stop-opacity="0.11"/><stop offset="0.033" stop-color="#0a1450" stop-opacity="0.00"/><stop offset="0.036" stop-color="#0a1450" stop-opacity="0.10"/><stop offset="0.039" stop-color="#0a1450" stop-opacity="0.02"/><stop offset="0.042" stop-color="#0a1450" stop-opacity="0.05"/><stop offset="0.045" stop-color="#0a1450" stop-opacity="0.00"/><stop offset="0.048" stop-color="#0a1450" stop-opacity="0.00"/><stop offset="0.051" stop-color="#0a1450" stop-opacity="0.01"/><stop offset="0.054" stop-color="#0a1450" stop-opacity="0.15"/><stop offset="0.057" stop-color="#0a1450" stop-opacity="0.01"/><stop offset="0.060" stop-color="#0a1450" stop-opacity="0.09"/><stop offset="0.063" stop-color="#0a1450" stop-opacity="0.14"/><stop offset="0.066" stop-color="#0a1450" stop-opacity="0.14"/><stop offset="0.069" stop-color="#0a1450" stop-opacity="0.02"/><stop offset="0.072" stop-color="#0a1450" stop-opacity="0.02"/><stop offset="0.075" stop-color="#0a1450" stop-opacity="0.04"/><stop offset="0.078" stop-color="#0a1450" stop-opacity="0.10"/><stop offset="0.081" stop-color="#0a1450" stop-opacity="0.00"/><stop offset="0.084" stop-color="#0a1450" stop-opacity="0.09"/><stop offset="0.087" stop-color="#0a1450" stop-opacity="0.10"/><stop offset="0.090" stop-color="#0a1450" stop-opacity="0.12"/><stop offset="0.093" stop-color="#0a1450" stop-opacity="0.00"/><stop offset="0.096" stop-color="#0a1450" stop-opacity="0.14"/><stop offset="0.099" stop-color="#0a1450" stop-opacity="0.00"/><stop offset="0.102" stop-color="#0a1450" stop-opacity="0.02"/><stop offset="0.105" stop-color="#0a1450" stop-opacity="0.06"/><stop offset="0.108" stop-color="#0a1450" stop-opacity="0.13"/><stop offset="0.111" stop-color="#0a1450" stop-opacity="0.02"/><stop offset="0.114" stop-color="#0a1450" stop-opacity="0.14"/><stop offset="0.117" stop-color="#0a1450" stop-opacity="0.05"/><stop offset="0.120" stop-color="#0a1450" stop-opacity="0.02"/><stop offset="0.123" stop-color="#0a1450" stop-opacity="0.02"/><stop offset="0.126" stop-color="#0a1450" stop-opacity="0.01"/><stop offset="0.129" stop-color="#0a1450" stop-opacity="0.00"/><stop offset="0.132" stop-color="#0a1450" stop-opacity="0.00"/><stop offset="0.135" stop-color="#0a1450" stop-opacity="0.08"/><stop offset="0.138" stop-color="#0a1450" stop-opacity="0.16"/><stop offset="0.141" stop-color="#0a1450" stop-opacity="0.00"/><stop offset="0.144" stop-color="#0a1450" stop-opacity="0.00"/><stop offset="0.147" stop-color="#0a1450" stop-opacity="0.16"/><stop offset="0.150" stop-color="#0a1450" stop-opacity="0.05"/><stop offset="0.153" stop-color="#0a1450" stop-opacity="0.03"/><stop offset="0.156" stop-color="#0a1450" stop-opacity="0.01"/><stop offset="0.159" stop-color="#0a1450" stop-opacity="0.06"/><stop offset="0.162" stop-color="#0a1450" stop-opacity="0.11"/><stop offset="0.165" stop-color="#0a1450" stop-opacity="0.03"/><stop offset="0.168" stop-color="#0a1450" stop-opacity="0.03"/><stop offset="0.171" stop-color="#0a1450" stop-opacity="0.00"/><stop offset="0.174" stop-color="#0a1450" stop-opacity="0.13"/><stop offset="0.177" stop-color="#0a1450" stop-opacity="0.00"/><stop offset="0.180" stop-color="#0a1450" stop-opacity="0.04"/><stop offset="0.183" stop-color="#0a1450" stop-opacity="0.11"/><stop offset="0.186" stop-color="#0a1450" stop-opacity="0.00"/><stop offset="0.189" stop-color="#0a1450" stop-opacity="0.09"/><stop offset="0.192" stop-color="#0a1450" stop-opacity="0.14"/><stop offset="0.195" stop-color="#0a1450" stop-opacity="0.06"/><stop offset="0.198" stop-color="#0a1450" stop-opacity="0.10"/><stop offset="0.201" stop-color="#0a1450" stop-opacity="0.00"/><stop offset="0.204" stop-color="#0a1450" stop-opacity="0.03"/><stop offset="0.207" stop-color="#0a1450" stop-opacity="0.00"/><stop offset="0.210" stop-color="#0a1450" stop-opacity="0.11"/><stop offset="0.213" stop-color="#0a1450" stop-opacity="0.01"/><stop offset="0.216" stop-color="#0a1450" stop-opacity="0.03"/><stop offset="0.219" stop-color="#0a1450" stop-opacity="0.16"/><stop offset="0.222" stop-color="#0a1450" stop-opacity="0.12"/><stop offset="0.225" stop-color="#0a1450" stop-opacity="0.15"/><stop offset="0.228" stop-color="#0a1450" stop-opacity="0.03"/><stop offset="0.231" stop-color="#0a1450" stop-opacity="0.04"/><stop offset="0.234" stop-color="#0a1450" stop-opacity="0.09"/><stop offset="0.237" stop-color="#0a1450" stop-opacity="0.04"/><stop offset="0.240" stop-color="#0a1450" stop-opacity="0.01"/><stop offset="0.243" stop-color="#0a1450" stop-opacity="0.03"/><stop offset="0.246" stop-color="#0a1450" stop-opacity="0.00"/><stop offset="0.249" stop-color="#0a1450" stop-opacity="0.02"/><stop offset="0.252" stop-color="#0a1450" stop-opacity="0.16"/><stop offset="0.255" stop-color="#0a1450" stop-opacity="0.15"/><stop offset="0.258" stop-color="#0a1450" stop-opacity="0.06"/><stop offset="0.261" stop-color="#0a1450" stop-opacity="0.04"/><stop offset="0.264" stop-color="#0a1450" stop-opacity="0.02"/><stop offset="0.267" stop-color="#0a1450" stop-opacity="0.00"/><stop offset="0.270" stop-color="#0a1450" stop-opacity="0.01"/><stop offset="0.273" stop-color="#0a1450" stop-opacity="0.10"/><stop offset="0.276" stop-color="#0a1450" stop-opacity="0.12"/><stop offset="0.279" stop-color="#0a1450" stop-opacity="0.02"/><stop offset="0.282" stop-color="#0a1450" stop-opacity="0.10"/><stop offset="0.285" stop-color="#0a1450" stop-opacity="0.10"/><stop offset="0.288" stop-color="#0a1450" stop-opacity="0.08"/><stop offset="0.291" stop-color="#0a1450" stop-opacity="0.07"/><stop offset="0.294" stop-color="#0a1450" stop-opacity="0.09"/><stop offset="0.297" stop-color="#0a1450" stop-opacity="0.02"/><stop offset="0.300" stop-color="#0a1450" stop-opacity="0.08"/><stop offset="0.303" stop-color="#0a1450" stop-opacity="0.01"/><stop offset="0.306" stop-color="#0a1450" stop-opacity="0.04"/><stop offset="0.309" stop-color="#0a1450" stop-opacity="0.09"/><stop offset="0.312" stop-color="#0a1450" stop-opacity="0.08"/><stop offset="0.315" stop-color="#0a1450" stop-opacity="0.01"/><stop offset="0.318" stop-color="#0a1450" stop-opacity="0.14"/><stop offset="0.321" stop-color="#0a1450" stop-opacity="0.07"/><stop offset="0.324" stop-color="#0a1450" stop-opacity="0.05"/><stop offset="0.327" stop-color="#0a1450" stop-opacity="0.00"/><stop offset="0.330" stop-color="#0a1450" stop-opacity="0.05"/><stop offset="0.333" stop-color="#0a1450" stop-opacity="0.01"/><stop offset="0.336" stop-color="#0a1450" stop-opacity="0.07"/><stop offset="0.339" stop-color="#0a1450" stop-opacity="0.03"/><stop offset="0.342" stop-color="#0a1450" stop-opacity="0.11"/><stop offset="0.345" stop-color="#0a1450" stop-opacity="0.07"/><stop offset="0.348" stop-color="#0a1450" stop-opacity="0.10"/><stop offset="0.351" stop-color="#0a1450" stop-opacity="0.02"/><stop offset="0.354" stop-color="#0a1450" stop-opacity="0.07"/><stop offset="0.357" stop-color="#0a1450" stop-opacity="0.09"/><stop offset="0.360" stop-color="#0a1450" stop-opacity="0.11"/><stop offset="0.363" stop-color="#0a1450" stop-opacity="0.02"/><stop offset="0.366" stop-color="#0a1450" stop-opacity="0.11"/><stop offset="0.369" stop-color="#0a1450" stop-opacity="0.12"/><stop offset="0.372" stop-color="#0a1450" stop-opacity="0.08"/><stop offset="0.375" stop-color="#0a1450" stop-opacity="0.15"/><stop offset="0.378" stop-color="#0a1450" stop-opacity="0.15"/><stop offset="0.381" stop-color="#0a1450" stop-opacity="0.04"/><stop offset="0.384" stop-color="#0a1450" stop-opacity="0.04"/><stop offset="0.387" stop-color="#0a1450" stop-opacity="0.00"/><stop offset="0.390" stop-color="#0a1450" stop-opacity="0.11"/><stop offset="0.393" stop-color="#0a1450" stop-opacity="0.14"/><stop offset="0.396" stop-color="#0a1450" stop-opacity="0.04"/><stop offset="0.399" stop-color="#0a1450" stop-opacity="0.08"/><stop offset="0.402" stop-color="#0a1450" stop-opacity="0.08"/><stop offset="0.405" stop-color="#0a1450" stop-opacity="0.09"/><stop offset="0.408" stop-color="#0a1450" stop-opacity="0.00"/><stop offset="0.411" stop-color="#0a1450" stop-opacity="0.10"/><stop offset="0.414" stop-color="#0a1450" stop-opacity="0.05"/><stop offset="0.417" stop-color="#0a1450" stop-opacity="0.07"/><stop offset="0.420" stop-color="#0a1450" stop-opacity="0.03"/><stop offset="0.423" stop-color="#0a1450" stop-opacity="0.06"/><stop offset="0.426" stop-color="#0a1450" stop-opacity="0.10"/><stop offset="0.429" stop-color="#0a1450" stop-opacity="0.06"/><stop offset="0.432" stop-color="#0a1450" stop-opacity="0.08"/><stop offset="0.435" stop-color="#0a1450" stop-opacity="0.00"/><stop offset="0.438" stop-color="#0a1450" stop-opacity="0.00"/><stop offset="0.441" stop-color="#0a1450" stop-opacity="0.03"/><stop offset="0.444" stop-color="#0a1450" stop-opacity="0.07"/><stop offset="0.447" stop-color="#0a1450" stop-opacity="0.01"/><stop offset="0.450" stop-color="#0a1450" stop-opacity="0.08"/><stop offset="0.453" stop-color="#0a1450" stop-opacity="0.06"/><stop offset="0.456" stop-color="#0a1450" stop-opacity="0.00"/><stop offset="0.459" stop-color="#0a1450" stop-opacity="0.04"/><stop offset="0.462" stop-color="#0a1450" stop-opacity="0.01"/><stop offset="0.465" stop-color="#0a1450" stop-opacity="0.00"/><stop offset="0.468" stop-color="#0a1450" stop-opacity="0.00"/><stop offset="0.471" stop-color="#0a1450" stop-opacity="0.02"/><stop offset="0.474" stop-color="#0a1450" stop-opacity="0.01"/><stop offset="0.477" stop-color="#0a1450" stop-opacity="0.01"/><stop offset="0.480" stop-color="#0a1450" stop-opacity="0.00"/><stop offset="0.483" stop-color="#0a1450" stop-opacity="0.03"/><stop offset="0.486" stop-color="#0a1450" stop-opacity="0.02"/><stop offset="0.489" stop-color="#0a1450" stop-opacity="0.06"/><stop offset="0.492" stop-color="#0a1450" stop-opacity="0.06"/><stop offset="0.495" stop-color="#0a1450" stop-opacity="0.01"/><stop offset="0.498" stop-color="#0a1450" stop-opacity="0.13"/><stop offset="0.501" stop-color="#0a1450" stop-opacity="0.00"/><stop offset="0.504" stop-color="#0a1450" stop-opacity="0.03"/><stop offset="0.507" stop-color="#0a1450" stop-opacity="0.01"/><stop offset="0.510" stop-color="#0a1450" stop-opacity="0.03"/><stop offset="0.513" stop-color="#0a1450" stop-opacity="0.00"/><stop offset="0.516" stop-color="#0a1450" stop-opacity="0.11"/><stop offset="0.519" stop-color="#0a1450" stop-opacity="0.02"/><stop offset="0.522" stop-color="#0a1450" stop-opacity="0.00"/><stop offset="0.525" stop-color="#0a1450" stop-opacity="0.06"/><stop offset="0.528" stop-color="#0a1450" stop-opacity="0.00"/><stop offset="0.531" stop-color="#0a1450" stop-opacity="0.05"/><stop offset="0.534" stop-color="#0a1450" stop-opacity="0.02"/><stop offset="0.537" stop-color="#0a1450" stop-opacity="0.05"/><stop offset="0.540" stop-color="#0a1450" stop-opacity="0.15"/><stop offset="0.543" stop-color="#0a1450" stop-opacity="0.11"/><stop offset="0.546" stop-color="#0a1450" stop-opacity="0.03"/><stop offset="0.549" stop-color="#0a1450" stop-opacity="0.11"/><stop offset="0.552" stop-color="#0a1450" stop-opacity="0.07"/><stop offset="0.555" stop-color="#0a1450" stop-opacity="0.02"/><stop offset="0.558" stop-color="#0a1450" stop-opacity="0.00"/><stop offset="0.561" stop-color="#0a1450" stop-opacity="0.06"/><stop offset="0.564" stop-color="#0a1450" stop-opacity="0.05"/><stop offset="0.567" stop-color="#0a1450" stop-opacity="0.15"/><stop offset="0.570" stop-color="#0a1450" stop-opacity="0.15"/><stop offset="0.573" stop-color="#0a1450" stop-opacity="0.06"/><stop offset="0.576" stop-color="#0a1450" stop-opacity="0.02"/><stop offset="0.579" stop-color="#0a1450" stop-opacity="0.13"/><stop offset="0.582" stop-color="#0a1450" stop-opacity="0.00"/><stop offset="0.585" stop-color="#0a1450" stop-opacity="0.00"/><stop offset="0.588" stop-color="#0a1450" stop-opacity="0.05"/><stop offset="0.591" stop-color="#0a1450" stop-opacity="0.06"/><stop offset="0.594" stop-color="#0a1450" stop-opacity="0.00"/><stop offset="0.597" stop-color="#0a1450" stop-opacity="0.06"/><stop offset="0.600" stop-color="#0a1450" stop-opacity="0.13"/><stop offset="0.603" stop-color="#0a1450" stop-opacity="0.02"/><stop offset="0.606" stop-color="#0a1450" stop-opacity="0.03"/><stop offset="0.609" stop-color="#0a1450" stop-opacity="0.01"/><stop offset="0.612" stop-color="#0a1450" stop-opacity="0.01"/><stop offset="0.615" stop-color="#0a1450" stop-opacity="0.15"/><stop offset="0.618" stop-color="#0a1450" stop-opacity="0.02"/><stop offset="0.621" stop-color="#0a1450" stop-opacity="0.15"/><stop offset="0.624" stop-color="#0a1450" stop-opacity="0.13"/><stop offset="0.627" stop-color="#0a1450" stop-opacity="0.06"/><stop offset="0.630" stop-color="#0a1450" stop-opacity="0.01"/><stop offset="0.633" stop-color="#0a1450" stop-opacity="0.15"/><stop offset="0.636" stop-color="#0a1450" stop-opacity="0.04"/><stop offset="0.639" stop-color="#0a1450" stop-opacity="0.03"/><stop offset="0.642" stop-color="#0a1450" stop-opacity="0.02"/><stop offset="0.645" stop-color="#0a1450" stop-opacity="0.16"/><stop offset="0.648" stop-color="#0a1450" stop-opacity="0.04"/><stop offset="0.651" stop-color="#0a1450" stop-opacity="0.01"/><stop offset="0.654" stop-color="#0a1450" stop-opacity="0.04"/><stop offset="0.657" stop-color="#0a1450" stop-opacity="0.00"/><stop offset="0.660" stop-color="#0a1450" stop-opacity="0.06"/><stop offset="0.663" stop-color="#0a1450" stop-opacity="0.03"/><stop offset="0.666" stop-color="#0a1450" stop-opacity="0.01"/><stop offset="0.669" stop-color="#0a1450" stop-opacity="0.10"/><stop offset="0.672" stop-color="#0a1450" stop-opacity="0.11"/><stop offset="0.675" stop-color="#0a1450" stop-opacity="0.00"/><stop offset="0.678" stop-color="#0a1450" stop-opacity="0.05"/><stop offset="0.681" stop-color="#0a1450" stop-opacity="0.01"/><stop offset="0.684" stop-color="#0a1450" stop-opacity="0.14"/><stop offset="0.687" stop-color="#0a1450" stop-opacity="0.10"/><stop offset="0.690" stop-color="#0a1450" stop-opacity="0.01"/><stop offset="0.693" stop-color="#0a1450" stop-opacity="0.01"/><stop offset="0.696" stop-color="#0a1450" stop-opacity="0.00"/><stop offset="0.699" stop-color="#0a1450" stop-opacity="0.16"/><stop offset="0.702" stop-color="#0a1450" stop-opacity="0.01"/><stop offset="0.705" stop-color="#0a1450" stop-opacity="0.06"/><stop offset="0.708" stop-color="#0a1450" stop-opacity="0.04"/><stop offset="0.711" stop-color="#0a1450" stop-opacity="0.07"/><stop offset="0.714" stop-color="#0a1450" stop-opacity="0.06"/><stop offset="0.717" stop-color="#0a1450" stop-opacity="0.09"/><stop offset="0.720" stop-color="#0a1450" stop-opacity="0.00"/><stop offset="0.723" stop-color="#0a1450" stop-opacity="0.09"/><stop offset="0.726" stop-color="#0a1450" stop-opacity="0.01"/><stop offset="0.729" stop-color="#0a1450" stop-opacity="0.05"/><stop offset="0.732" stop-color="#0a1450" stop-opacity="0.02"/><stop offset="0.735" stop-color="#0a1450" stop-opacity="0.01"/><stop offset="0.738" stop-color="#0a1450" stop-opacity="0.04"/><stop offset="0.741" stop-color="#0a1450" stop-opacity="0.03"/><stop offset="0.744" stop-color="#0a1450" stop-opacity="0.02"/><stop offset="0.747" stop-color="#0a1450" stop-opacity="0.09"/><stop offset="0.750" stop-color="#0a1450" stop-opacity="0.06"/><stop offset="0.753" stop-color="#0a1450" stop-opacity="0.00"/><stop offset="0.756" stop-color="#0a1450" stop-opacity="0.01"/><stop offset="0.759" stop-color="#0a1450" stop-opacity="0.03"/><stop offset="0.762" stop-color="#0a1450" stop-opacity="0.13"/><stop offset="0.765" stop-color="#0a1450" stop-opacity="0.13"/><stop offset="0.768" stop-color="#0a1450" stop-opacity="0.05"/><stop offset="0.771" stop-color="#0a1450" stop-opacity="0.00"/><stop offset="0.774" stop-color="#0a1450" stop-opacity="0.10"/><stop offset="0.777" stop-color="#0a1450" stop-opacity="0.03"/><stop offset="0.780" stop-color="#0a1450" stop-opacity="0.05"/><stop offset="0.783" stop-color="#0a1450" stop-opacity="0.08"/><stop offset="0.786" stop-color="#0a1450" stop-opacity="0.06"/><stop offset="0.789" stop-color="#0a1450" stop-opacity="0.04"/><stop offset="0.792" stop-color="#0a1450" stop-opacity="0.13"/><stop offset="0.795" stop-color="#0a1450" stop-opacity="0.02"/><stop offset="0.798" stop-color="#0a1450" stop-opacity="0.02"/><stop offset="0.801" stop-color="#0a1450" stop-opacity="0.12"/><stop offset="0.804" stop-color="#0a1450" stop-opacity="0.01"/><stop offset="0.807" stop-color="#0a1450" stop-opacity="0.01"/><stop offset="0.810" stop-color="#0a1450" stop-opacity="0.11"/><stop offset="0.813" stop-color="#0a1450" stop-opacity="0.00"/><stop offset="0.816" stop-color="#0a1450" stop-opacity="0.11"/><stop offset="0.819" stop-color="#0a1450" stop-opacity="0.08"/><stop offset="0.822" stop-color="#0a1450" stop-opacity="0.03"/><stop offset="0.825" stop-color="#0a1450" stop-opacity="0.01"/><stop offset="0.828" stop-color="#0a1450" stop-opacity="0.10"/><stop offset="0.831" stop-color="#0a1450" stop-opacity="0.13"/><stop offset="0.834" stop-color="#0a1450" stop-opacity="0.00"/><stop offset="0.837" stop-color="#0a1450" stop-opacity="0.04"/><stop offset="0.840" stop-color="#0a1450" stop-opacity="0.05"/><stop offset="0.843" stop-color="#0a1450" stop-opacity="0.04"/><stop offset="0.846" stop-color="#0a1450" stop-opacity="0.02"/><stop offset="0.849" stop-color="#0a1450" stop-opacity="0.00"/><stop offset="0.852" stop-color="#0a1450" stop-opacity="0.05"/><stop offset="0.855" stop-color="#0a1450" stop-opacity="0.11"/><stop offset="0.858" stop-color="#0a1450" stop-opacity="0.00"/><stop offset="0.861" stop-color="#0a1450" stop-opacity="0.01"/><stop offset="0.864" stop-color="#0a1450" stop-opacity="0.11"/><stop offset="0.867" stop-color="#0a1450" stop-opacity="0.10"/><stop offset="0.870" stop-color="#0a1450" stop-opacity="0.07"/><stop offset="0.873" stop-color="#0a1450" stop-opacity="0.00"/><stop offset="0.876" stop-color="#0a1450" stop-opacity="0.08"/><stop offset="0.879" stop-color="#0a1450" stop-opacity="0.15"/><stop offset="0.882" stop-color="#0a1450" stop-opacity="0.16"/><stop offset="0.885" stop-color="#0a1450" stop-opacity="0.08"/><stop offset="0.888" stop-color="#0a1450" stop-opacity="0.00"/><stop offset="0.891" stop-color="#0a1450" stop-opacity="0.11"/><stop offset="0.894" stop-color="#0a1450" stop-opacity="0.01"/><stop offset="0.897" stop-color="#0a1450" stop-opacity="0.07"/><stop offset="0.900" stop-color="#0a1450" stop-opacity="0.15"/><stop offset="0.903" stop-color="#0a1450" stop-opacity="0.08"/><stop offset="0.906" stop-color="#0a1450" stop-opacity="0.00"/><stop offset="0.909" stop-color="#0a1450" stop-opacity="0.01"/><stop offset="0.912" stop-color="#0a1450" stop-opacity="0.13"/><stop offset="0.915" stop-color="#0a1450" stop-opacity="0.00"/><stop offset="0.918" stop-color="#0a1450" stop-opacity="0.06"/><stop offset="0.921" stop-color="#0a1450" stop-opacity="0.03"/><stop offset="0.924" stop-color="#0a1450" stop-opacity="0.00"/><stop offset="0.927" stop-color="#0a1450" stop-opacity="0.06"/><stop offset="0.930" stop-color="#0a1450" stop-opacity="0.00"/><stop offset="0.933" stop-color="#0a1450" stop-opacity="0.00"/><stop offset="0.936" stop-color="#0a1450" stop-opacity="0.02"/><stop offset="0.939" stop-color="#0a1450" stop-opacity="0.00"/><stop offset="0.942" stop-color="#0a1450" stop-opacity="0.00"/><stop offset="0.945" stop-color="#0a1450" stop-opacity="0.05"/><stop offset="0.948" stop-color="#0a1450" stop-opacity="0.09"/><stop offset="0.951" stop-color="#0a1450" stop-opacity="0.12"/><stop offset="0.954" stop-color="#0a1450" stop-opacity="0.00"/><stop offset="0.957" stop-color="#0a1450" stop-opacity="0.03"/><stop offset="0.960" stop-color="#0a1450" stop-opacity="0.02"/><stop offset="0.963" stop-color="#0a1450" stop-opacity="0.06"/><stop offset="0.966" stop-color="#0a1450" stop-opacity="0.04"/><stop offset="0.969" stop-color="#0a1450" stop-opacity="0.14"/><stop offset="0.972" stop-color="#0a1450" stop-opacity="0.02"/><stop offset="0.975" stop-color="#0a1450" stop-opacity="0.00"/><stop offset="0.978" stop-color="#0a1450" stop-opacity="0.08"/><stop offset="0.981" stop-color="#0a1450" stop-opacity="0.00"/><stop offset="0.984" stop-color="#0a1450" stop-opacity="0.06"/><stop offset="0.987" stop-color="#0a1450" stop-opacity="0.04"/><stop offset="0.990" stop-color="#0a1450" stop-opacity="0.13"/><stop offset="0.993" stop-color="#0a1450" stop-opacity="0.05"/><stop offset="0.996" stop-color="#0a1450" stop-opacity="0.06"/><stop offset="0.999" stop-color="#0a1450" stop-opacity="0.01"/></linearGradient><filter id="grain" x="0" y="0" width="100%" height="100%"><feTurbulence type="fractalNoise" baseFrequency="0.9 0.25" numOctaves="2" seed="3"/><feColorMatrix values="0 0 0 0 0.05  0 0 0 0 0.08  0 0 0 0 0.3  0 0 0 -1.6 0.9"/></filter><filter id="spk" x="0" y="0" width="100%" height="100%"><feTurbulence type="fractalNoise" baseFrequency="0.12 0.8" numOctaves="2" seed="9"/><feColorMatrix values="0 0 0 0 0.2  0 0 0 0 0.28  0 0 0 0 0.6  0 0 0 1.5 -0.9"/></filter><linearGradient id="fzm" x1="0" x2="1"><stop offset="0" stop-color="#fff" stop-opacity="0"/><stop offset="1" stop-color="#fff" stop-opacity="1"/></linearGradient><linearGradient id="fzm2" x1="0" x2="1"><stop offset="0" stop-color="#fff" stop-opacity="1"/><stop offset="1" stop-color="#fff" stop-opacity="0"/></linearGradient><mask id="mL" maskUnits="userSpaceOnUse" x="708" y="535" width="37" height="292"><rect x="708" y="535" width="37" height="292" fill="url(#fzm)"/></mask><mask id="mR" maskUnits="userSpaceOnUse" x="1402" y="535" width="34" height="292"><rect x="1402" y="535" width="34" height="292" fill="url(#fzm2)"/></mask><rect x="708" y="535" width="37" height="276" fill="#2a3c98" opacity="0.14" mask="url(#mL)"/><rect x="708" y="535" width="37" height="276" filter="url(#spk)" mask="url(#mL)"/><rect x="1402" y="535" width="34" height="276" fill="#2a3c98" opacity="0.14" mask="url(#mR)"/><rect x="1402" y="535" width="34" height="276" filter="url(#spk)" mask="url(#mR)"/><rect x="745" y="535" width="657" height="292" fill="#5a78dc"/><rect x="745" y="535" width="657" height="292" fill="url(#cols)"/><rect x="745" y="535" width="657" height="292" fill="url(#cols2)"/><rect x="745" y="535" width="657" height="292" filter="url(#grain)" opacity="0.3"/><rect x="745" y="810" width="657" height="17" fill="#6282e6"/><rect x="745" y="809" width="657" height="1.5" fill="#24348a" opacity="0.8"/><rect x="640" y="810" width="105" height="17" fill="url(#bbl)"/><rect x="1402" y="810" width="110" height="17" fill="url(#bbr)"/><rect x="745" y="810" width="657" height="17" filter="url(#grain)" opacity="0.35"/><linearGradient id="edgeL" x1="0" x2="1"><stop offset="0" stop-color="#020222" stop-opacity="0.85"/><stop offset="1" stop-color="#020222" stop-opacity="0"/></linearGradient><linearGradient id="edgeR" x1="0" x2="1"><stop offset="0" stop-color="#020222" stop-opacity="0"/><stop offset="1" stop-color="#020222" stop-opacity="0.85"/></linearGradient><rect x="745" y="535" width="10" height="275" fill="url(#edgeL)" opacity="0.6"/><rect x="1392" y="535" width="10" height="275" fill="url(#edgeR)" opacity="0.6"/><rect x="745" y="636" width="16" height="114" fill="#0c1450" opacity="0.35" filter="url(#blur2)"/><rect x="733" y="535" width="12" height="275" fill="url(#fzl)" opacity="0.6"/><rect x="1385" y="680" width="17" height="130" fill="#0c1450" opacity="0.35" filter="url(#blur2)"/><rect x="1402" y="535" width="12" height="275" fill="url(#fzr)" opacity="0.6"/><rect x="760" y="554.5" width="630" height="2" fill="#7492f6" opacity="0.62"/><rect x="760" y="590.8" width="630" height="2" fill="#7492f6" opacity="0.62"/><rect x="760" y="627" width="630" height="2" fill="#7492f6" opacity="0.62"/><rect x="760" y="663.3" width="630" height="2" fill="#7492f6" opacity="0.62"/><rect x="760" y="699.6" width="630" height="2" fill="#7492f6" opacity="0.62"/><rect x="760" y="735.9" width="630" height="2" fill="#7492f6" opacity="0.62"/><rect x="760" y="772.2" width="630" height="2" fill="#7492f6" opacity="0.62"/><ellipse cx="748" cy="663" rx="40" ry="3" fill="#7a98f8" opacity="0.5" filter="url(#blur2)"/><ellipse cx="1400" cy="663" rx="40" ry="3" fill="#7a98f8" opacity="0.5" filter="url(#blur2)"/><rect x="1012" y="541" width="124" height="28" fill="#6a88ea" opacity="0.3"/><rect x="1032" y="548" width="85" height="15" fill="#22347e"/><rect x="1036" y="548" width="2" height="15" fill="#0a1040" opacity="0.8"/><rect x="1041" y="548" width="2" height="15" fill="#0a1040" opacity="0.8"/><rect x="1047" y="548" width="2" height="15" fill="#0a1040" opacity="0.8"/><rect x="1058" y="548" width="2" height="15" fill="#0a1040" opacity="0.8"/><rect x="1066" y="548" width="2" height="15" fill="#0a1040" opacity="0.8"/><rect x="1079" y="548" width="2" height="15" fill="#0a1040" opacity="0.8"/><rect x="1085" y="548" width="2" height="15" fill="#0a1040" opacity="0.8"/><rect x="1096" y="548" width="2" height="15" fill="#0a1040" opacity="0.8"/><rect x="1104" y="548" width="2" height="15" fill="#0a1040" opacity="0.8"/><rect x="1110" y="548" width="2" height="15" fill="#0a1040" opacity="0.8"/><svg x="745" y="535" width="657" height="292" viewBox="745 535 657 292" overflow="hidden"><g transform="translate(800,547) rotate(38)"><rect x="-25" y="-13" width="50" height="26" fill="none" stroke="#7a98f4" stroke-width="4" opacity="0.35" filter="url(#blur2)"/><rect x="-20" y="-9.5" width="40" height="19" fill="#4a62c0" opacity="0.6" stroke="#141c5c" stroke-width="2.6" stroke-opacity="0.9"/><path d="M-17 -3.5 H17 M-17 3 H17" stroke="#1a2670" stroke-width="1.2" opacity="0.55"/></g><g transform="translate(1349,547) rotate(-38)"><rect x="-25" y="-13" width="50" height="26" fill="none" stroke="#7a98f4" stroke-width="4" opacity="0.35" filter="url(#blur2)"/><rect x="-20" y="-9.5" width="40" height="19" fill="#4a62c0" opacity="0.6" stroke="#141c5c" stroke-width="2.6" stroke-opacity="0.9"/><path d="M-17 -3.5 H17 M-17 3 H17" stroke="#1a2670" stroke-width="1.2" opacity="0.55"/></g><g transform="translate(800,782) rotate(-52)"><rect x="-25" y="-13" width="50" height="26" fill="none" stroke="#7a98f4" stroke-width="4" opacity="0.35" filter="url(#blur2)"/><rect x="-20" y="-9.5" width="40" height="19" fill="#4a62c0" opacity="0.6" stroke="#141c5c" stroke-width="2.6" stroke-opacity="0.9"/><path d="M-17 -3.5 H17 M-17 3 H17" stroke="#1a2670" stroke-width="1.2" opacity="0.55"/></g><g transform="translate(1350,782) rotate(52)"><rect x="-25" y="-13" width="50" height="26" fill="none" stroke="#7a98f4" stroke-width="4" opacity="0.35" filter="url(#blur2)"/><rect x="-20" y="-9.5" width="40" height="19" fill="#4a62c0" opacity="0.6" stroke="#141c5c" stroke-width="2.6" stroke-opacity="0.9"/><path d="M-17 -3.5 H17 M-17 3 H17" stroke="#1a2670" stroke-width="1.2" opacity="0.55"/></g></svg><rect x="888" y="592" width="46" height="34" fill="#6484e6" opacity="0.6"/><rect x="893" y="650" width="30" height="14" fill="#4a66c8" opacity="0.5"/><rect x="899" y="663" width="2.6" height="73" fill="#121a58" opacity="0.85" filter="url(#blur2)"/><rect x="909.5" y="663" width="2.6" height="73" fill="#121a58" opacity="0.85" filter="url(#blur2)"/><rect x="920" y="663" width="2.6" height="73" fill="#121a58" opacity="0.85" filter="url(#blur2)"/><rect x="1228" y="590" width="2.6" height="146" fill="#121a58" opacity="0.85" filter="url(#blur2)"/><rect x="1237.5" y="590" width="2.6" height="146" fill="#121a58" opacity="0.85" filter="url(#blur2)"/><rect x="1248" y="590" width="2.6" height="146" fill="#121a58" opacity="0.85" filter="url(#blur2)"/><ellipse cx="1078" cy="665" rx="101" ry="87" fill="#5674d6" stroke="#6e8cf0" stroke-width="2" stroke-opacity="0.3"/><ellipse cx="1078" cy="665" rx="100" ry="86" fill="url(#cols2)" opacity="0.6"/><ellipse cx="1078" cy="667" rx="99" ry="85" fill="none" stroke="#2a3c98" stroke-width="1.5" opacity="0.2"/><g filter="url(#blur3)"><path d="M1030 597 C1022 612 1010 640 1004 662 C998 676 990 684 991 690 C994 704 1010 724 1022 731 C1034 738 1046 742 1056 745" fill="none" stroke="#1a2470" stroke-width="8" opacity="0.75"/><path d="M1028 596 L1040 600 L1036 616 L1026 640 L1016 638 L1020 615z" fill="#1a2470" opacity="0.55"/><path d="M1040 656 L1050 660 L1048 700 L1042 708 L1034 704 L1040 690z" fill="#1e2a78" opacity="0.5"/><path d="M1016 650 C1026 660 1036 690 1040 706" fill="none" stroke="#1e2a78" stroke-width="3" opacity="0.45"/><path d="M1066 630 L1142 625 L1142 646 L1066 660z" fill="#1c2872" opacity="0.6"/><path d="M1044 657 L1142 643" stroke="#7a96f0" stroke-width="1.2" opacity="0.6"/><path d="M1073 711 L1100 686 L1144 714z" fill="#1c2872" opacity="0.62"/><path d="M1035 735 L1064 721 L1056 745 L1040 744z" fill="#1a2470" opacity="0.6"/><path d="M1150 620 C1158 636 1164 652 1163 668 C1162 680 1160 688 1158 692" fill="none" stroke="#1a2470" stroke-width="11" opacity="0.65"/><path d="M1106 664 L1106 684" stroke="#1a2470" stroke-width="3" opacity="0.5"/></g><path d="M1074.5 506 V996 M1100.5 506 V996" stroke="#3a8a48" stroke-width="1" stroke-dasharray="3 2"/></svg>
<div class="a" style="left:991px;top:927px;width:166px;height:59px;background:rgba(0,0,0,0.82);border-radius:5px"></div>
<div class="t mono" style="left:999px;top:935px;font-size:13.8px;color:#f4f4f4;line-height:22.6px;white-space:pre">Freq:      434 MHz
Span: ±122.745 kHz</div>
<div class="a" style="left:268px;top:996px;width:1612px;height:28px;background:#f0f0f0"></div>
<div class="a" style="left:295px;top:996px;width:1467px;height:27px;background:linear-gradient(#8a8a8a 0,#8a8a8a 1px,#4a4a4a 2px,#333 11px,#262626 14px,#000 14px)"></div>
<div class="a" style="left:881px;top:996px;width:296px;height:27px;background:linear-gradient(#8a8a8a 0,#8a8a8a 1px,#5a5a5a 2px,#444 12px,#333 14px,#2a2a2a 100%);border-left:2px solid #b8b8b8;border-right:2px solid #b8b8b8"></div>
<div class="a" style="left:883px;top:1008px;width:292px;height:15px;background:radial-gradient(ellipse 55% 100% at 50% 100%,#c8c020 0%,#8a8410 40%,transparent 90%);opacity:0.9"></div>
<svg class="a" style="left:0;top:990px" width="1920" height="40"><path d="M298.5 7 v2.5 M310.5 7 v5 M322.5 7 v2.5 M334.5 7 v3.5 M346.5 7 v2.5 M358.5 7 v3.5 M370.5 7 v2.5 M382.5 7 v3.5 M394.5 7 v2.5 M406.5 7 v3.5 M418.5 7 v2.5 M430.5 7 v5 M442.5 7 v2.5 M454.5 7 v3.5 M466.5 7 v2.5 M478.5 7 v3.5 M490.5 7 v2.5 M502.5 7 v3.5 M514.5 7 v2.5 M526.5 7 v3.5 M538.5 7 v2.5 M550.5 7 v5 M562.5 7 v2.5 M573.5 7 v3.5 M585.5 7 v2.5 M597.5 7 v3.5 M609.5 7 v2.5 M621.5 7 v3.5 M633.5 7 v2.5 M645.5 7 v3.5 M657.5 7 v2.5 M669.5 7 v5 M681.5 7 v2.5 M693.5 7 v3.5 M705.5 7 v2.5 M717.5 7 v3.5 M729.5 7 v2.5 M741.5 7 v3.5 M753.5 7 v2.5 M765.5 7 v3.5 M777.5 7 v2.5 M789.5 7 v5 M801.5 7 v2.5 M813.5 7 v3.5 M825.5 7 v2.5 M837.5 7 v3.5 M848.5 7 v2.5 M860.5 7 v3.5 M872.5 7 v2.5 M884.5 7 v3.5 M896.5 7 v2.5 M908.5 7 v5 M920.5 7 v2.5 M932.5 7 v3.5 M944.5 7 v2.5 M956.5 7 v3.5 M968.5 7 v2.5 M980.5 7 v3.5 M992.5 7 v2.5 M1004.5 7 v3.5 M1016.5 7 v2.5 M1028.5 7 v5 M1040.5 7 v2.5 M1052.5 7 v3.5 M1064.5 7 v2.5 M1076.5 7 v3.5 M1088.5 7 v2.5 M1100.5 7 v3.5 M1111.5 7 v2.5 M1123.5 7 v3.5 M1135.5 7 v2.5 M1147.5 7 v5 M1159.5 7 v2.5 M1171.5 7 v3.5 M1183.5 7 v2.5 M1195.5 7 v3.5 M1207.5 7 v2.5 M1219.5 7 v3.5 M1231.5 7 v2.5 M1243.5 7 v3.5 M1255.5 7 v2.5 M1267.5 7 v5 M1279.5 7 v2.5 M1291.5 7 v3.5 M1303.5 7 v2.5 M1315.5 7 v3.5 M1327.5 7 v2.5 M1339.5 7 v3.5 M1351.5 7 v2.5 M1363.5 7 v3.5 M1375.5 7 v2.5 M1386.5 7 v5 M1398.5 7 v2.5 M1410.5 7 v3.5 M1422.5 7 v2.5 M1434.5 7 v3.5 M1446.5 7 v2.5 M1458.5 7 v3.5 M1470.5 7 v2.5 M1482.5 7 v3.5 M1494.5 7 v2.5 M1506.5 7 v5 M1518.5 7 v2.5 M1530.5 7 v3.5 M1542.5 7 v2.5 M1554.5 7 v3.5 M1566.5 7 v2.5 M1578.5 7 v3.5 M1590.5 7 v2.5 M1602.5 7 v3.5 M1614.5 7 v2.5 M1626.5 7 v5 M1638.5 7 v2.5 M1650.5 7 v3.5 M1661.5 7 v2.5 M1673.5 7 v3.5 M1685.5 7 v2.5 M1697.5 7 v3.5 M1709.5 7 v2.5 M1721.5 7 v3.5 M1733.5 7 v2.5 M1745.5 7 v5 M1757.5 7 v2.5" stroke="#a8a8a8" stroke-width="1.4"/><path d="M1028.5 6 V33" stroke="#f8f000" stroke-width="1.6"/><g font-family="Liberation Sans" font-size="12.7" fill="#cfcfcf"><text x="310.4" y="28" text-anchor="middle">433.400</text><text x="430.0" y="28" text-anchor="middle">433.500</text><text x="549.6" y="28" text-anchor="middle">433.600</text><text x="669.1" y="28" text-anchor="middle">433.700</text><text x="788.7" y="28" text-anchor="middle">433.800</text><text x="908.2" y="28" text-anchor="middle">433.900</text><text x="1027.8" y="28" text-anchor="middle">434.000</text><text x="1147.4" y="28" text-anchor="middle">434.100</text><text x="1266.9" y="28" text-anchor="middle">434.200</text><text x="1386.5" y="28" text-anchor="middle">434.300</text><text x="1506.0" y="28" text-anchor="middle">434.400</text><text x="1625.6" y="28" text-anchor="middle">434.500</text><text x="1745.2" y="28" text-anchor="middle">434.600</text></g><rect x="0" y="0" width="295" height="40" fill="none"/></svg>
<div class="a" style="left:268px;top:996px;width:27px;height:28px;background:#f0f0f0"></div>
<div class="a" style="left:1762px;top:996px;width:118px;height:28px;background:#f0f0f0"></div>
<div class="a" style="left:270px;top:997px;width:24px;height:24px;background:#e4e4e4;border:1px solid #a8a8a8"></div>
<svg class="a" style="left:270px;top:997px" width="24" height="24"><circle cx="12" cy="12" r="7.5" fill="#fff" stroke="#444" stroke-width="1.6"/><path d="M7.5 12 l4 -3 v6z M11 12 l4 -3 v6z" fill="#222"/></svg>
<div class="a" style="left:1763px;top:998px;width:37px;height:24px;background:#e4e4e4;border:1px solid #b0b0b0"></div>
<svg class="a" style="left:1764px;top:997px" width="35" height="25"><rect x="10.5" y="9.5" width="15" height="8" rx="1" fill="#f4f4f4" stroke="#444"/><path d="M12 12 h12 M12 14.5 h12" stroke="#666" stroke-dasharray="1 1"/><path d="M18 9 v-2 l2 -2" stroke="#444" fill="none"/></svg>
<div class="a" style="left:1802px;top:998px;width:50px;height:24px;background:#e4e4e4;border:1px solid #b0b0b0"></div>
<div class="t" style="left:1811px;top:1003px;font-size:12px;color:#222">x5</div>
<svg class="a" style="left:1838px;top:1003px" width="10" height="14"><path d="M2 2 l5 5 l-5 5z" fill="#111"/></svg>
<div class="a" style="left:1854px;top:998px;width:25px;height:24px;background:#e4e4e4;border:1px solid #b0b0b0"></div>
<svg class="a" style="left:1853px;top:998px" width="27" height="25"><circle cx="13.5" cy="12.5" r="7.5" fill="#fff" stroke="#444" stroke-width="1.6"/><path d="M9.5 9.5 l4 3 l-4 3z M13 9.5 l4 3 l-4 3z" fill="#222"/></svg>

<div class="a" style="left:1880px;top:146px;width:1px;height:850px;background:#8a8a8a"></div>
<div class="a" style="left:1881px;top:146px;width:37px;height:878px;background:#000"></div>
<div class="a" style="left:1918px;top:146px;width:2px;height:878px;background:#f0f0f0"></div>
<div class="a" style="left:1882px;top:147px;width:36px;height:28px;background:linear-gradient(#3a3a3a 0,#474747 14px,#000 14px)"></div>
<div class="a" style="left:1882px;top:175px;width:36px;height:1px;background:#555"></div>
<div class="t" style="left:1882px;width:36px;text-align:center;top:155px;font-size:12px;color:#f4f4f4">Auto</div>
<div class="a" style="left:1883px;top:271px;width:34px;height:359px;background:linear-gradient(#ffff00 0,#ffffa0 4%,#ffffff 9%,#ffffff 20%,#e4eafd 32%,#a4b8f6 46%,#5e7ee8 61%,#3450b8 76%,#1c2678 90%,#0c1038 100%)"></div>
<div class="a" style="left:1883px;top:630px;width:34px;height:2px;background:#f0f0f0"></div>
<svg class="a" style="left:1881px;top:146px" width="37" height="850"><g font-family="Liberation Sans" font-size="8.5" text-anchor="middle"><text x="18.5" y="85" fill="#c8c8c8">-10</text><rect x="4.5" y="125.5" width="28" height="18" rx="5" fill="#7a7418"/><text x="18.5" y="138" fill="#d8d8c0">-20</text><rect x="4.5" y="178.5" width="28" height="18" rx="5" fill="#000" opacity="0.45"/><text x="18.5" y="191" fill="#d0d0d8">-30</text><rect x="4.5" y="231.5" width="28" height="18" rx="5" fill="#000" opacity="0.45"/><text x="18.5" y="244" fill="#d0d0d8">-40</text><rect x="4.5" y="284.5" width="28" height="18" rx="5" fill="#000" opacity="0.45"/><text x="18.5" y="297" fill="#d0d0d8">-50</text><rect x="4.5" y="337.5" width="28" height="18" rx="5" fill="#000" opacity="0.45"/><text x="18.5" y="350" fill="#d0d0d8">-60</text><rect x="4.5" y="390.5" width="28" height="18" rx="5" fill="#000" opacity="0.45"/><text x="18.5" y="403" fill="#d0d0d8">-70</text><rect x="4.5" y="443.5" width="28" height="18" rx="5" fill="#000" opacity="0.45"/><text x="18.5" y="456" fill="#d0d0d8">-80</text><text x="18.5" y="509" fill="#c8c8c8">-90</text><text x="18.5" y="562" fill="#c8c8c8">-100</text><text x="18.5" y="615" fill="#c8c8c8">-110</text><text x="18.5" y="668" fill="#c8c8c8">-120</text><text x="18.5" y="721" fill="#c8c8c8">-130</text><text x="18.5" y="774" fill="#c8c8c8">-140</text><text x="18.5" y="827" fill="#c8c8c8">-150</text></g></svg>
<div class="a" style="left:0;top:1024px;width:1920px;height:24px;background:#f0f0f0"></div>
<div class="t" style="left:9px;top:1030px;font-size:11.5px;color:#5a5a5a">SDRPlay RSP1, BW = 1.000 MHz</div>
<div class="t" style="left:1448px;top:1030px;font-size:11.5px;color:#222">CPU: 1.1%</div>
<div class="a" style="left:1513px;top:1031px;width:70px;height:12px;background:#e6e6e6;border:1px solid #bcbcbc"></div>
<div class="t" style="left:1597px;top:1030px;font-size:11.5px;color:#222">Audio: 17ms</div>
<div class="a" style="left:1675px;top:1031px;width:69px;height:12px;background:#e6e6e6;border:1px solid #bcbcbc"></div>
<div class="a" style="left:1677px;top:1033px;width:19px;height:8px;background:#06b025"></div>
<div class="t" style="left:1758px;top:1030px;font-size:11.5px;color:#222">Size: 504.0 MB</div>
<div class="a" style="left:1845px;top:1031px;width:70px;height:12px;background:#e6e6e6;border:1px solid #bcbcbc"></div>
<div class="a" style="left:1847px;top:1034px;width:3px;height:6px;background:#06b025"></div>
</body></html>
